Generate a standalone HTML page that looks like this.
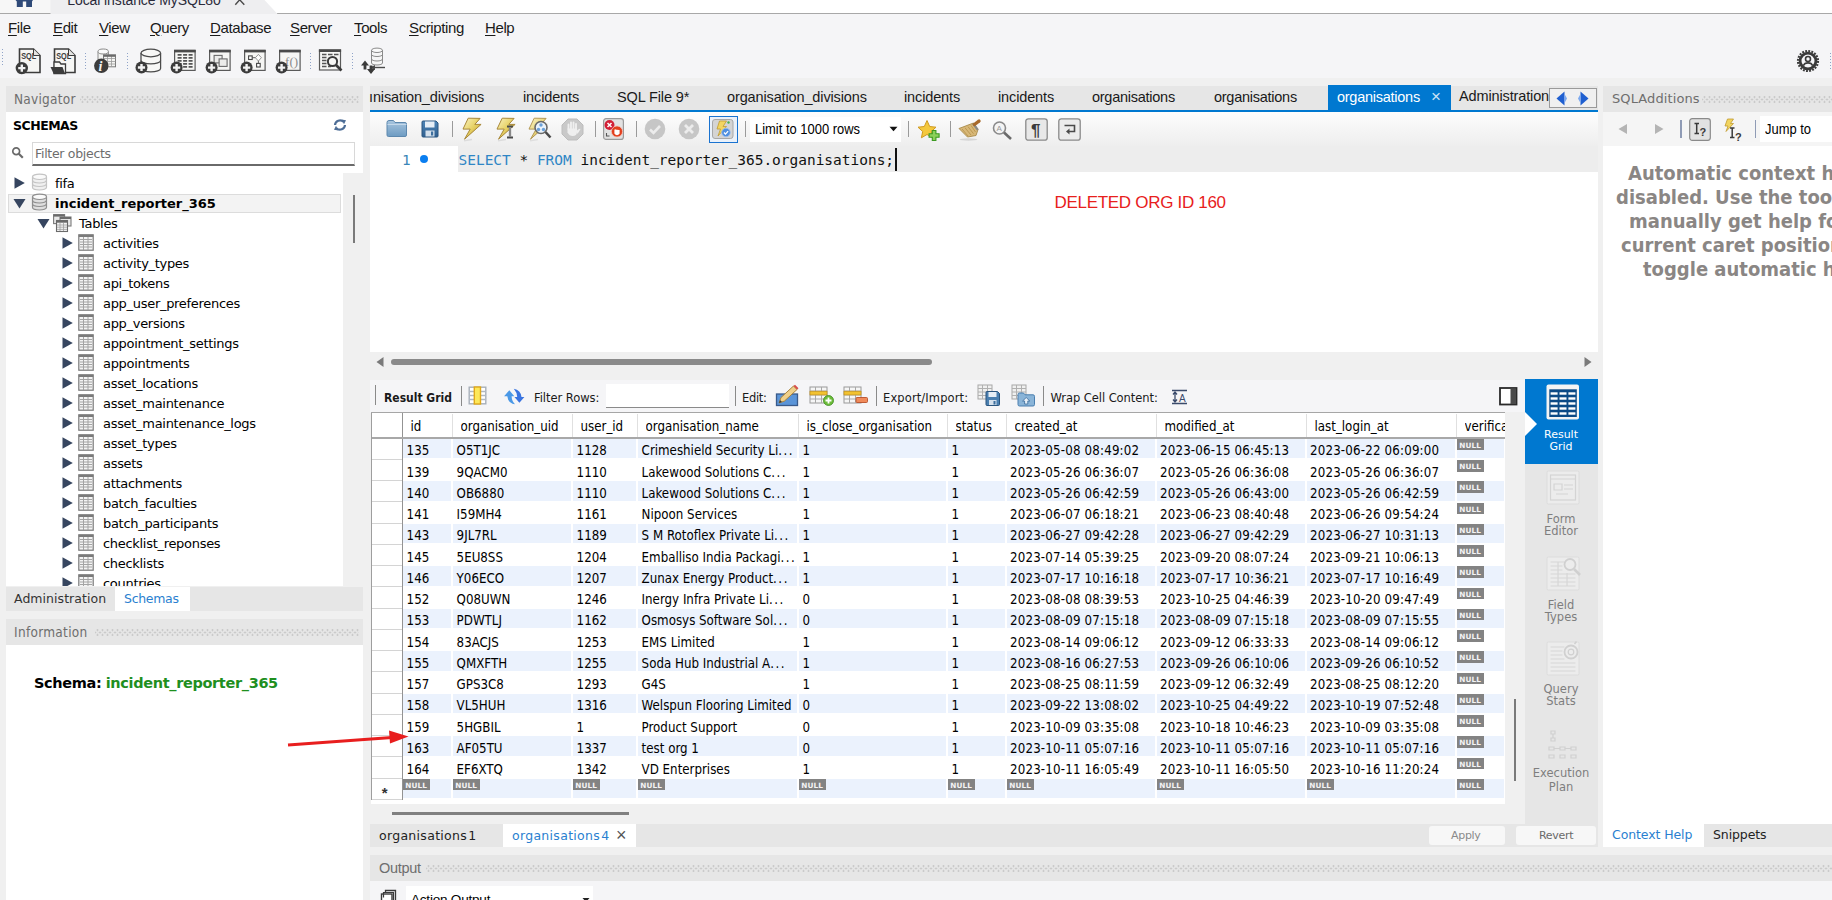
<!DOCTYPE html><html><head><meta charset="utf-8"><title>MySQL Workbench</title><style>
*{box-sizing:border-box;margin:0;padding:0}
html,body{width:1832px;height:900px;overflow:hidden;background:#f0f0f0;font-family:"Liberation Sans",sans-serif;}
.a{position:absolute;white-space:nowrap}
.dj{font-family:"DejaVu Sans","Liberation Sans",sans-serif}
.djc{font-family:"DejaVu Sans Condensed","Liberation Sans",sans-serif}
.lib{font-family:"Liberation Sans",sans-serif}
.mono{font-family:"DejaVu Sans Mono","Liberation Mono",monospace}
.menu{top:19px;font-size:15px;color:#1a1a1a;line-height:18px;letter-spacing:-0.38px}
.menu u{text-decoration:underline;text-underline-offset:2px}
.hdr{background:#e6e6e6;color:#6e6e6e;font-size:13px;line-height:25px}
.dots{background-image:radial-gradient(circle,#bdbdbd 0.75px,transparent 1.15px),radial-gradient(circle,#bdbdbd 0.75px,transparent 1.15px);background-size:5px 5px;background-position:0 -1.5px,2.5px 1px;height:7px !important}
.tree{font-size:13px;color:#000;line-height:22px;letter-spacing:-0.3px}
.tab{font-size:14.5px;color:#1a1a1a;line-height:20px;top:87px;letter-spacing:-0.13px}
.g{font-size:13.2px;color:#000;line-height:21px;letter-spacing:0}
.gh{font-size:13.2px;color:#000;line-height:24px;letter-spacing:0}
.null{background:#838383;color:#f4f4f4;font-size:7.3px;font-weight:bold;line-height:13.6px;height:11.5px;width:27px;text-align:left;padding-left:2.2px;letter-spacing:0.1px;overflow:hidden}
.rt{font-size:11.5px;color:#1a1a1a;line-height:20px;font-weight:bold}
.side{font-size:11.5px;line-height:12px;text-align:center;width:72px;color:#7e7e7e}
</style></head><body>
<div class="a" style="left:0px;top:0px;width:1832px;height:13px;background:#ffffff;"></div>
<div class="a" style="left:0px;top:0px;width:51px;height:13px;background:#f7f7f7;"></div>
<div class="a" style="left:0px;top:13px;width:51px;height:1px;background:#a8a8a8;"></div>
<div class="a" style="left:277px;top:13px;width:1555px;height:1px;background:#a8a8a8;"></div>
<svg class="a" style="left:0;top:0" width="300" height="14"><polygon points="50.500,0 264.500,0 277.500,14 50.500,14" fill="#eeeef0"/><path d="M15.500 0h17.500l-1 1.500v5.400h-5.800v-5.400h-3.400v5.400h-6v-5.400z" fill="#2f4a78"/><path d="M235.300 4.700L239.700 -0.200L244.300 4.700" stroke="#4a4a4a" stroke-width="1.400" fill="none"/></svg>
<div class="a lib" style="left:67.3px;top:-8.6px;font-size:14px;line-height:18px;color:#2a2a3a;letter-spacing:-0.1px">Local instance MySQL80</div>
<div class="a" style="left:0px;top:14px;width:1832px;height:28px;background:#f5f5f7;"></div>
<div class="a menu" style="left:8px;top:19px;"><u>F</u>ile</div>
<div class="a menu" style="left:53px;top:19px;"><u>E</u>dit</div>
<div class="a menu" style="left:99px;top:19px;"><u>V</u>iew</div>
<div class="a menu" style="left:150px;top:19px;"><u>Q</u>uery</div>
<div class="a menu" style="left:210px;top:19px;"><u>D</u>atabase</div>
<div class="a menu" style="left:290px;top:19px;"><u>S</u>erver</div>
<div class="a menu" style="left:354px;top:19px;"><u>T</u>ools</div>
<div class="a menu" style="left:409px;top:19px;"><u>S</u>cripting</div>
<div class="a menu" style="left:485px;top:19px;"><u>H</u>elp</div>
<div class="a" style="left:0px;top:42px;width:1832px;height:36px;background:#f5f5f7;"></div>
<div class="a" style="left:6px;top:86px;width:357px;height:26px;background:#e6e6e6;"></div>
<div class="a djc hdr" style="left:14px;top:86px;background:none;letter-spacing:0.25px;font-size:13.5px;line-height:26px">Navigator</div>
<div class="a dots" style="left:80px;top:95.5px;width:279px;height:7px;"></div>
<div class="a" style="left:6px;top:112px;width:357px;height:474px;background:#ffffff;"></div>
<div class="a dj" style="left:13px;top:117px;font-weight:bold;font-size:12.5px;line-height:18px;letter-spacing:-0.5px;color:#000">SCHEMAS</div>
<div class="a" style="left:32px;top:141.7px;width:323px;height:24.6px;background:#ffffff;border:1px solid #d8d8d8;border-bottom:2px solid #6a6a6a"></div>
<div class="a dj" style="left:35px;top:145px;font-size:12.5px;line-height:18px;color:#6d6d6d;letter-spacing:-0.3px">Filter objects</div>
<div class="a" style="left:343px;top:173px;width:20px;height:413px;background:#f0f0f0;"></div>
<div class="a" style="left:353px;top:195px;width:2px;height:48px;background:#7a7a7a;"></div>
<div class="a" style="left:8px;top:194px;width:333px;height:19px;background:#f3f3f3;border:1px solid #dcdcdc"></div>
<div class="a dj tree" style="left:55px;top:173px;">fifa</div>
<div class="a dj tree" style="left:55px;top:193px;font-weight:bold;letter-spacing:0px">incident_reporter_365</div>
<div class="a dj tree" style="left:79px;top:213px;">Tables</div>
<div class="a" style="left:6px;top:233px;width:337px;height:353px;overflow:hidden">
<div class="a dj tree" style="left:97px;top:0px;">activities</div>
<div class="a dj tree" style="left:97px;top:20px;">activity_types</div>
<div class="a dj tree" style="left:97px;top:40px;">api_tokens</div>
<div class="a dj tree" style="left:97px;top:60px;">app_user_preferences</div>
<div class="a dj tree" style="left:97px;top:80px;">app_versions</div>
<div class="a dj tree" style="left:97px;top:100px;">appointment_settings</div>
<div class="a dj tree" style="left:97px;top:120px;">appointments</div>
<div class="a dj tree" style="left:97px;top:140px;">asset_locations</div>
<div class="a dj tree" style="left:97px;top:160px;">asset_maintenance</div>
<div class="a dj tree" style="left:97px;top:180px;">asset_maintenance_logs</div>
<div class="a dj tree" style="left:97px;top:200px;">asset_types</div>
<div class="a dj tree" style="left:97px;top:220px;">assets</div>
<div class="a dj tree" style="left:97px;top:240px;">attachments</div>
<div class="a dj tree" style="left:97px;top:260px;">batch_faculties</div>
<div class="a dj tree" style="left:97px;top:280px;">batch_participants</div>
<div class="a dj tree" style="left:97px;top:300px;">checklist_reponses</div>
<div class="a dj tree" style="left:97px;top:320px;">checklists</div>
<div class="a dj tree" style="left:97px;top:340px;">countries</div>
</div>
<div class="a" style="left:6px;top:587px;width:357px;height:24px;background:#e6e6e6;"></div>
<div class="a" style="left:115px;top:587px;width:75px;height:24px;background:#ffffff;"></div>
<div class="a dj" style="left:14px;top:590px;font-size:12.5px;line-height:18px;color:#333;letter-spacing:0.05px">Administration</div>
<div class="a dj" style="left:124px;top:590px;font-size:12.5px;line-height:18px;color:#2a7fd0;letter-spacing:-0.3px">Schemas</div>
<div class="a" style="left:6px;top:619px;width:357px;height:26px;background:#e6e6e6;"></div>
<div class="a djc hdr" style="left:14px;top:619px;background:none;letter-spacing:0.3px;font-size:13.5px;line-height:26px">Information</div>
<div class="a dots" style="left:95px;top:628.5px;width:264px;height:7px;"></div>
<div class="a" style="left:6px;top:645px;width:357px;height:255px;background:#ffffff;"></div>
<div class="a dj" style="left:34px;top:673px;font-size:14.5px;line-height:20px;letter-spacing:-0.35px;color:#000"><b>Schema:</b> <b style="color:#1f8f1f">incident_reporter_365</b></div>
<div class="a" style="left:370px;top:86px;width:1228px;height:24px;background:#e6e6e6;"></div>
<div class="a" style="left:370px;top:109.5px;width:1228px;height:2.7px;background:#0078d0;"></div>
<div class="a lib tab" style="left:369px;top:87px;">ınisation_divisions</div>
<div class="a lib tab" style="left:523px;top:87px;">incidents</div>
<div class="a lib tab" style="left:617px;top:87px;">SQL File 9*</div>
<div class="a lib tab" style="left:727px;top:87px;">organisation_divisions</div>
<div class="a lib tab" style="left:904px;top:87px;">incidents</div>
<div class="a lib tab" style="left:998px;top:87px;">incidents</div>
<div class="a lib tab" style="left:1092px;top:87px;letter-spacing:-0.26px">organisations</div>
<div class="a lib tab" style="left:1214px;top:87px;letter-spacing:-0.26px">organisations</div>
<div class="a" style="left:1328px;top:85px;width:123px;height:25px;background:#0078d0;"></div>
<div class="a lib tab" style="left:1337px;top:87px;color:#fff;letter-spacing:-0.26px">organisations</div>
<div class="a lib tab" style="left:1431px;top:87px;color:#cfe2f5;font-size:17px">×</div>
<div class="a lib tab" style="left:1459px;top:86px;">Administration</div>
<div class="a" style="left:1549px;top:88px;width:48px;height:20px;background:#f0f0f0;border:1px solid #9a9a9a"></div>
<div class="a" style="left:370px;top:112px;width:1228px;height:34px;background:;background:linear-gradient(#fdfdfd,#eeeeee)"></div>
<div class="a" style="left:750px;top:117px;width:151px;height:25px;background:#ffffff;"></div>
<div class="a lib" style="left:755px;top:119px;font-size:14.5px;line-height:20px;color:#000;transform:scaleX(.893);transform-origin:0 0">Limit to 1000 rows</div>
<div class="a" style="left:370px;top:146px;width:1228px;height:206px;background:#ffffff;"></div>
<div class="a" style="left:458px;top:146px;width:1140px;height:25.5px;background:#ededed;"></div>
<div class="a mono" style="left:402px;top:149.7px;font-size:14.3px;line-height:20px;color:#3a86b8">1</div>
<div class="a" style="left:420px;top:155px;width:8px;height:8px;background:#0a7ef0;border-radius:50%"></div>
<div class="a mono" style="left:458.5px;top:149.7px;font-size:14.47px;line-height:20px;color:#111"><span style="color:#2f86c5">SELECT</span> * <span style="color:#2f86c5">FROM</span> incident_reporter_365.organisations;</div>
<div class="a" style="left:895px;top:148px;width:2px;height:23px;background:#111;"></div>
<div class="a lib" style="left:1054.5px;top:193px;font-size:17px;line-height:20px;color:#e8201c;letter-spacing:-0.3px">DELETED ORG ID 160</div>
<div class="a" style="left:370px;top:352px;width:1228px;height:28px;background:#f0f0f0;"></div>
<div class="a" style="left:391px;top:358.5px;width:541px;height:6.5px;background:#8a8a8a;border-radius:3.5px"></div>
<div class="a" style="left:370px;top:379.5px;width:1155px;height:33px;background:#f5f5f7;"></div>
<div class="a" style="left:375px;top:385px;width:1px;height:20px;background:#8a8a8a;"></div>
<div class="a djc rt" style="left:384px;top:387.5px;letter-spacing:0;font-size:12px">Result Grid</div>
<div class="a" style="left:461px;top:386px;width:1px;height:20px;background:#8a8a8a;"></div>
<div class="a dj rt" style="left:534px;top:387.5px;font-weight:normal;letter-spacing:-0.05px">Filter Rows:</div>
<div class="a" style="left:606px;top:384px;width:123px;height:24px;background:#ffffff;border-bottom:1px solid #8a8a8a"></div>
<div class="a" style="left:735px;top:386px;width:1px;height:20px;background:#8a8a8a;"></div>
<div class="a dj rt" style="left:742px;top:387.5px;font-weight:normal;letter-spacing:-0.3px">Edit:</div>
<div class="a" style="left:876px;top:386px;width:1px;height:20px;background:#8a8a8a;"></div>
<div class="a dj rt" style="left:883px;top:387.5px;font-weight:normal;letter-spacing:0.12px">Export/Import:</div>
<div class="a" style="left:1043px;top:386px;width:1px;height:20px;background:#8a8a8a;"></div>
<div class="a dj rt" style="left:1050.5px;top:387.5px;font-weight:normal;letter-spacing:-0.06px">Wrap Cell Content:</div>
<div class="a" style="left:370.5px;top:412px;width:1134.5px;height:392px;background:#ffffff;"></div>
<div class="a" style="left:370.5px;top:412px;width:1.5px;height:388px;background:#9e9e9e;"></div>
<div class="a" style="left:370.5px;top:412px;width:1134.5px;height:1.3px;background:#a6a6a6;"></div>
<div class="a" style="left:402px;top:414px;width:1px;height:24px;background:#e0e0e0;"></div>
<div class="a djc gh" style="left:410.5px;top:415px;width:41px;overflow:hidden">id</div>
<div class="a" style="left:452px;top:414px;width:1px;height:24px;background:#e0e0e0;"></div>
<div class="a djc gh" style="left:460.5px;top:415px;width:111px;overflow:hidden">organisation_uid</div>
<div class="a" style="left:572px;top:414px;width:1px;height:24px;background:#e0e0e0;"></div>
<div class="a djc gh" style="left:580.5px;top:415px;width:56px;overflow:hidden">user_id</div>
<div class="a" style="left:637px;top:414px;width:1px;height:24px;background:#e0e0e0;"></div>
<div class="a djc gh" style="left:645.5px;top:415px;width:152px;overflow:hidden">organisation_name</div>
<div class="a" style="left:798px;top:414px;width:1px;height:24px;background:#e0e0e0;"></div>
<div class="a djc gh" style="left:806.5px;top:415px;width:140px;overflow:hidden">is_close_organisation</div>
<div class="a" style="left:947px;top:414px;width:1px;height:24px;background:#e0e0e0;"></div>
<div class="a djc gh" style="left:955.5px;top:415px;width:50px;overflow:hidden">status</div>
<div class="a" style="left:1006px;top:414px;width:1px;height:24px;background:#e0e0e0;"></div>
<div class="a djc gh" style="left:1014.5px;top:415px;width:141px;overflow:hidden">created_at</div>
<div class="a" style="left:1156px;top:414px;width:1px;height:24px;background:#e0e0e0;"></div>
<div class="a djc gh" style="left:1164.5px;top:415px;width:141px;overflow:hidden">modified_at</div>
<div class="a" style="left:1306px;top:414px;width:1px;height:24px;background:#e0e0e0;"></div>
<div class="a djc gh" style="left:1314.5px;top:415px;width:141px;overflow:hidden">last_login_at</div>
<div class="a" style="left:1456px;top:414px;width:1px;height:24px;background:#e0e0e0;"></div>
<div class="a djc gh" style="left:1464.5px;top:415px;width:40px;overflow:hidden">verifica</div>
<div class="a" style="left:402px;top:413.3px;width:1.1px;height:386.7px;background:#939393;"></div>
<div class="a" style="left:372px;top:437px;width:1133px;height:1.6px;background:#a8a8a8;"></div>
<div class="a" style="left:372px;top:458.8px;width:30px;height:1px;background:#d4d4d4;"></div>
<div class="a" style="left:403.3px;top:438.7px;width:47.7px;height:19.6px;background:#ebf2fd;"></div>
<div class="a" style="left:453.3px;top:438.7px;width:117.7px;height:19.6px;background:#ebf2fd;"></div>
<div class="a" style="left:573.3px;top:438.7px;width:62.7px;height:19.6px;background:#ebf2fd;"></div>
<div class="a" style="left:638.3px;top:438.7px;width:158.7px;height:19.6px;background:#ebf2fd;"></div>
<div class="a" style="left:799.3px;top:438.7px;width:146.7px;height:19.6px;background:#ebf2fd;"></div>
<div class="a" style="left:948.3px;top:438.7px;width:56.7px;height:19.6px;background:#ebf2fd;"></div>
<div class="a" style="left:1007.3px;top:438.7px;width:147.7px;height:19.6px;background:#ebf2fd;"></div>
<div class="a" style="left:1157.3px;top:438.7px;width:147.7px;height:19.6px;background:#ebf2fd;"></div>
<div class="a" style="left:1307.3px;top:438.7px;width:147.7px;height:19.6px;background:#ebf2fd;"></div>
<div class="a" style="left:1457.3px;top:438.7px;width:46.7px;height:19.6px;background:#ebf2fd;"></div>
<div class="a djc g" style="left:406.6px;top:440.3px;">135</div>
<div class="a djc g" style="left:456.6px;top:440.3px;">O5T1JC</div>
<div class="a djc g" style="left:576.6px;top:440.3px;">1128</div>
<div class="a djc g" style="left:641.6px;top:440.3px;">Crimeshield Security Li<span style="letter-spacing:1.500px">...</span></div>
<div class="a djc g" style="left:802.6px;top:440.3px;">1</div>
<div class="a djc g" style="left:951.6px;top:440.3px;">1</div>
<div class="a djc g" style="left:1010.0px;top:440.3px;letter-spacing:0.17px;">2023-05-08 08:49:02</div>
<div class="a djc g" style="left:1160.0px;top:440.3px;letter-spacing:0.17px;">2023-06-15 06:45:13</div>
<div class="a djc g" style="left:1310.0px;top:440.3px;letter-spacing:0.17px;">2023-06-22 06:09:00</div>
<div class="a dj null" style="left:1457px;top:438.8px">NULL</div>
<div class="a" style="left:372px;top:480.0px;width:30px;height:1px;background:#d4d4d4;"></div>
<div class="a djc g" style="left:406.6px;top:461.6px;">139</div>
<div class="a djc g" style="left:456.6px;top:461.6px;">9QACM0</div>
<div class="a djc g" style="left:576.6px;top:461.6px;">1110</div>
<div class="a djc g" style="left:641.6px;top:461.6px;">Lakewood Solutions C<span style="letter-spacing:1.500px">...</span></div>
<div class="a djc g" style="left:802.6px;top:461.6px;">1</div>
<div class="a djc g" style="left:951.6px;top:461.6px;">1</div>
<div class="a djc g" style="left:1010.0px;top:461.6px;letter-spacing:0.17px;">2023-05-26 06:36:07</div>
<div class="a djc g" style="left:1160.0px;top:461.6px;letter-spacing:0.17px;">2023-05-26 06:36:08</div>
<div class="a djc g" style="left:1310.0px;top:461.6px;letter-spacing:0.17px;">2023-05-26 06:36:07</div>
<div class="a dj null" style="left:1457px;top:460.1px">NULL</div>
<div class="a" style="left:372px;top:501.2px;width:30px;height:1px;background:#d4d4d4;"></div>
<div class="a" style="left:403.3px;top:481.2px;width:47.7px;height:19.6px;background:#ebf2fd;"></div>
<div class="a" style="left:453.3px;top:481.2px;width:117.7px;height:19.6px;background:#ebf2fd;"></div>
<div class="a" style="left:573.3px;top:481.2px;width:62.7px;height:19.6px;background:#ebf2fd;"></div>
<div class="a" style="left:638.3px;top:481.2px;width:158.7px;height:19.6px;background:#ebf2fd;"></div>
<div class="a" style="left:799.3px;top:481.2px;width:146.7px;height:19.6px;background:#ebf2fd;"></div>
<div class="a" style="left:948.3px;top:481.2px;width:56.7px;height:19.6px;background:#ebf2fd;"></div>
<div class="a" style="left:1007.3px;top:481.2px;width:147.7px;height:19.6px;background:#ebf2fd;"></div>
<div class="a" style="left:1157.3px;top:481.2px;width:147.7px;height:19.6px;background:#ebf2fd;"></div>
<div class="a" style="left:1307.3px;top:481.2px;width:147.7px;height:19.6px;background:#ebf2fd;"></div>
<div class="a" style="left:1457.3px;top:481.2px;width:46.7px;height:19.6px;background:#ebf2fd;"></div>
<div class="a djc g" style="left:406.6px;top:482.8px;">140</div>
<div class="a djc g" style="left:456.6px;top:482.8px;">OB6880</div>
<div class="a djc g" style="left:576.6px;top:482.8px;">1110</div>
<div class="a djc g" style="left:641.6px;top:482.8px;">Lakewood Solutions C<span style="letter-spacing:1.500px">...</span></div>
<div class="a djc g" style="left:802.6px;top:482.8px;">1</div>
<div class="a djc g" style="left:951.6px;top:482.8px;">1</div>
<div class="a djc g" style="left:1010.0px;top:482.8px;letter-spacing:0.17px;">2023-05-26 06:42:59</div>
<div class="a djc g" style="left:1160.0px;top:482.8px;letter-spacing:0.17px;">2023-05-26 06:43:00</div>
<div class="a djc g" style="left:1310.0px;top:482.8px;letter-spacing:0.17px;">2023-05-26 06:42:59</div>
<div class="a dj null" style="left:1457px;top:481.3px">NULL</div>
<div class="a" style="left:372px;top:522.5px;width:30px;height:1px;background:#d4d4d4;"></div>
<div class="a djc g" style="left:406.6px;top:504.1px;">141</div>
<div class="a djc g" style="left:456.6px;top:504.1px;">I59MH4</div>
<div class="a djc g" style="left:576.6px;top:504.1px;">1161</div>
<div class="a djc g" style="left:641.6px;top:504.1px;">Nipoon Services</div>
<div class="a djc g" style="left:802.6px;top:504.1px;">1</div>
<div class="a djc g" style="left:951.6px;top:504.1px;">1</div>
<div class="a djc g" style="left:1010.0px;top:504.1px;letter-spacing:0.17px;">2023-06-07 06:18:21</div>
<div class="a djc g" style="left:1160.0px;top:504.1px;letter-spacing:0.17px;">2023-06-23 08:40:48</div>
<div class="a djc g" style="left:1310.0px;top:504.1px;letter-spacing:0.17px;">2023-06-26 09:54:24</div>
<div class="a dj null" style="left:1457px;top:502.6px">NULL</div>
<div class="a" style="left:372px;top:543.8px;width:30px;height:1px;background:#d4d4d4;"></div>
<div class="a" style="left:403.3px;top:523.7px;width:47.7px;height:19.6px;background:#ebf2fd;"></div>
<div class="a" style="left:453.3px;top:523.7px;width:117.7px;height:19.6px;background:#ebf2fd;"></div>
<div class="a" style="left:573.3px;top:523.7px;width:62.7px;height:19.6px;background:#ebf2fd;"></div>
<div class="a" style="left:638.3px;top:523.7px;width:158.7px;height:19.6px;background:#ebf2fd;"></div>
<div class="a" style="left:799.3px;top:523.7px;width:146.7px;height:19.6px;background:#ebf2fd;"></div>
<div class="a" style="left:948.3px;top:523.7px;width:56.7px;height:19.6px;background:#ebf2fd;"></div>
<div class="a" style="left:1007.3px;top:523.7px;width:147.7px;height:19.6px;background:#ebf2fd;"></div>
<div class="a" style="left:1157.3px;top:523.7px;width:147.7px;height:19.6px;background:#ebf2fd;"></div>
<div class="a" style="left:1307.3px;top:523.7px;width:147.7px;height:19.6px;background:#ebf2fd;"></div>
<div class="a" style="left:1457.3px;top:523.7px;width:46.7px;height:19.6px;background:#ebf2fd;"></div>
<div class="a djc g" style="left:406.6px;top:525.3px;">143</div>
<div class="a djc g" style="left:456.6px;top:525.3px;">9JL7RL</div>
<div class="a djc g" style="left:576.6px;top:525.3px;">1189</div>
<div class="a djc g" style="left:641.6px;top:525.3px;">S M Rotoflex Private Li<span style="letter-spacing:1.500px">...</span></div>
<div class="a djc g" style="left:802.6px;top:525.3px;">1</div>
<div class="a djc g" style="left:951.6px;top:525.3px;">1</div>
<div class="a djc g" style="left:1010.0px;top:525.3px;letter-spacing:0.17px;">2023-06-27 09:42:28</div>
<div class="a djc g" style="left:1160.0px;top:525.3px;letter-spacing:0.17px;">2023-06-27 09:42:29</div>
<div class="a djc g" style="left:1310.0px;top:525.3px;letter-spacing:0.17px;">2023-06-27 10:31:13</div>
<div class="a dj null" style="left:1457px;top:523.8px">NULL</div>
<div class="a" style="left:372px;top:565.0px;width:30px;height:1px;background:#d4d4d4;"></div>
<div class="a djc g" style="left:406.6px;top:546.6px;">145</div>
<div class="a djc g" style="left:456.6px;top:546.6px;">5EU8SS</div>
<div class="a djc g" style="left:576.6px;top:546.6px;">1204</div>
<div class="a djc g" style="left:641.6px;top:546.6px;">Emballiso India Packagi<span style="letter-spacing:1.500px">...</span></div>
<div class="a djc g" style="left:802.6px;top:546.6px;">1</div>
<div class="a djc g" style="left:951.6px;top:546.6px;">1</div>
<div class="a djc g" style="left:1010.0px;top:546.6px;letter-spacing:0.17px;">2023-07-14 05:39:25</div>
<div class="a djc g" style="left:1160.0px;top:546.6px;letter-spacing:0.17px;">2023-09-20 08:07:24</div>
<div class="a djc g" style="left:1310.0px;top:546.6px;letter-spacing:0.17px;">2023-09-21 10:06:13</div>
<div class="a dj null" style="left:1457px;top:545.1px">NULL</div>
<div class="a" style="left:372px;top:586.2px;width:30px;height:1px;background:#d4d4d4;"></div>
<div class="a" style="left:403.3px;top:566.2px;width:47.7px;height:19.6px;background:#ebf2fd;"></div>
<div class="a" style="left:453.3px;top:566.2px;width:117.7px;height:19.6px;background:#ebf2fd;"></div>
<div class="a" style="left:573.3px;top:566.2px;width:62.7px;height:19.6px;background:#ebf2fd;"></div>
<div class="a" style="left:638.3px;top:566.2px;width:158.7px;height:19.6px;background:#ebf2fd;"></div>
<div class="a" style="left:799.3px;top:566.2px;width:146.7px;height:19.6px;background:#ebf2fd;"></div>
<div class="a" style="left:948.3px;top:566.2px;width:56.7px;height:19.6px;background:#ebf2fd;"></div>
<div class="a" style="left:1007.3px;top:566.2px;width:147.7px;height:19.6px;background:#ebf2fd;"></div>
<div class="a" style="left:1157.3px;top:566.2px;width:147.7px;height:19.6px;background:#ebf2fd;"></div>
<div class="a" style="left:1307.3px;top:566.2px;width:147.7px;height:19.6px;background:#ebf2fd;"></div>
<div class="a" style="left:1457.3px;top:566.2px;width:46.7px;height:19.6px;background:#ebf2fd;"></div>
<div class="a djc g" style="left:406.6px;top:567.8px;">146</div>
<div class="a djc g" style="left:456.6px;top:567.8px;">Y06ECO</div>
<div class="a djc g" style="left:576.6px;top:567.8px;">1207</div>
<div class="a djc g" style="left:641.6px;top:567.8px;">Zunax Energy Product<span style="letter-spacing:1.500px">...</span></div>
<div class="a djc g" style="left:802.6px;top:567.8px;">1</div>
<div class="a djc g" style="left:951.6px;top:567.8px;">1</div>
<div class="a djc g" style="left:1010.0px;top:567.8px;letter-spacing:0.17px;">2023-07-17 10:16:18</div>
<div class="a djc g" style="left:1160.0px;top:567.8px;letter-spacing:0.17px;">2023-07-17 10:36:21</div>
<div class="a djc g" style="left:1310.0px;top:567.8px;letter-spacing:0.17px;">2023-07-17 10:16:49</div>
<div class="a dj null" style="left:1457px;top:566.3px">NULL</div>
<div class="a" style="left:372px;top:607.5px;width:30px;height:1px;background:#d4d4d4;"></div>
<div class="a djc g" style="left:406.6px;top:589.1px;">152</div>
<div class="a djc g" style="left:456.6px;top:589.1px;">Q08UWN</div>
<div class="a djc g" style="left:576.6px;top:589.1px;">1246</div>
<div class="a djc g" style="left:641.6px;top:589.1px;">Inergy Infra Private Li<span style="letter-spacing:1.500px">...</span></div>
<div class="a djc g" style="left:802.6px;top:589.1px;">0</div>
<div class="a djc g" style="left:951.6px;top:589.1px;">1</div>
<div class="a djc g" style="left:1010.0px;top:589.1px;letter-spacing:0.17px;">2023-08-08 08:39:53</div>
<div class="a djc g" style="left:1160.0px;top:589.1px;letter-spacing:0.17px;">2023-10-25 04:46:39</div>
<div class="a djc g" style="left:1310.0px;top:589.1px;letter-spacing:0.17px;">2023-10-20 09:47:49</div>
<div class="a dj null" style="left:1457px;top:587.6px">NULL</div>
<div class="a" style="left:372px;top:628.8px;width:30px;height:1px;background:#d4d4d4;"></div>
<div class="a" style="left:403.3px;top:608.7px;width:47.7px;height:19.6px;background:#ebf2fd;"></div>
<div class="a" style="left:453.3px;top:608.7px;width:117.7px;height:19.6px;background:#ebf2fd;"></div>
<div class="a" style="left:573.3px;top:608.7px;width:62.7px;height:19.6px;background:#ebf2fd;"></div>
<div class="a" style="left:638.3px;top:608.7px;width:158.7px;height:19.6px;background:#ebf2fd;"></div>
<div class="a" style="left:799.3px;top:608.7px;width:146.7px;height:19.6px;background:#ebf2fd;"></div>
<div class="a" style="left:948.3px;top:608.7px;width:56.7px;height:19.6px;background:#ebf2fd;"></div>
<div class="a" style="left:1007.3px;top:608.7px;width:147.7px;height:19.6px;background:#ebf2fd;"></div>
<div class="a" style="left:1157.3px;top:608.7px;width:147.7px;height:19.6px;background:#ebf2fd;"></div>
<div class="a" style="left:1307.3px;top:608.7px;width:147.7px;height:19.6px;background:#ebf2fd;"></div>
<div class="a" style="left:1457.3px;top:608.7px;width:46.7px;height:19.6px;background:#ebf2fd;"></div>
<div class="a djc g" style="left:406.6px;top:610.3px;">153</div>
<div class="a djc g" style="left:456.6px;top:610.3px;">PDWTLJ</div>
<div class="a djc g" style="left:576.6px;top:610.3px;">1162</div>
<div class="a djc g" style="left:641.6px;top:610.3px;">Osmosys Software Sol<span style="letter-spacing:1.500px">...</span></div>
<div class="a djc g" style="left:802.6px;top:610.3px;">0</div>
<div class="a djc g" style="left:951.6px;top:610.3px;">1</div>
<div class="a djc g" style="left:1010.0px;top:610.3px;letter-spacing:0.17px;">2023-08-09 07:15:18</div>
<div class="a djc g" style="left:1160.0px;top:610.3px;letter-spacing:0.17px;">2023-08-09 07:15:18</div>
<div class="a djc g" style="left:1310.0px;top:610.3px;letter-spacing:0.17px;">2023-08-09 07:15:55</div>
<div class="a dj null" style="left:1457px;top:608.8px">NULL</div>
<div class="a" style="left:372px;top:650.0px;width:30px;height:1px;background:#d4d4d4;"></div>
<div class="a djc g" style="left:406.6px;top:631.6px;">154</div>
<div class="a djc g" style="left:456.6px;top:631.6px;">83ACJS</div>
<div class="a djc g" style="left:576.6px;top:631.6px;">1253</div>
<div class="a djc g" style="left:641.6px;top:631.6px;">EMS Limited</div>
<div class="a djc g" style="left:802.6px;top:631.6px;">1</div>
<div class="a djc g" style="left:951.6px;top:631.6px;">1</div>
<div class="a djc g" style="left:1010.0px;top:631.6px;letter-spacing:0.17px;">2023-08-14 09:06:12</div>
<div class="a djc g" style="left:1160.0px;top:631.6px;letter-spacing:0.17px;">2023-09-12 06:33:33</div>
<div class="a djc g" style="left:1310.0px;top:631.6px;letter-spacing:0.17px;">2023-08-14 09:06:12</div>
<div class="a dj null" style="left:1457px;top:630.1px">NULL</div>
<div class="a" style="left:372px;top:671.2px;width:30px;height:1px;background:#d4d4d4;"></div>
<div class="a" style="left:403.3px;top:651.2px;width:47.7px;height:19.6px;background:#ebf2fd;"></div>
<div class="a" style="left:453.3px;top:651.2px;width:117.7px;height:19.6px;background:#ebf2fd;"></div>
<div class="a" style="left:573.3px;top:651.2px;width:62.7px;height:19.6px;background:#ebf2fd;"></div>
<div class="a" style="left:638.3px;top:651.2px;width:158.7px;height:19.6px;background:#ebf2fd;"></div>
<div class="a" style="left:799.3px;top:651.2px;width:146.7px;height:19.6px;background:#ebf2fd;"></div>
<div class="a" style="left:948.3px;top:651.2px;width:56.7px;height:19.6px;background:#ebf2fd;"></div>
<div class="a" style="left:1007.3px;top:651.2px;width:147.7px;height:19.6px;background:#ebf2fd;"></div>
<div class="a" style="left:1157.3px;top:651.2px;width:147.7px;height:19.6px;background:#ebf2fd;"></div>
<div class="a" style="left:1307.3px;top:651.2px;width:147.7px;height:19.6px;background:#ebf2fd;"></div>
<div class="a" style="left:1457.3px;top:651.2px;width:46.7px;height:19.6px;background:#ebf2fd;"></div>
<div class="a djc g" style="left:406.6px;top:652.8px;">155</div>
<div class="a djc g" style="left:456.6px;top:652.8px;">QMXFTH</div>
<div class="a djc g" style="left:576.6px;top:652.8px;">1255</div>
<div class="a djc g" style="left:641.6px;top:652.8px;">Soda Hub Industrial A<span style="letter-spacing:1.500px">...</span></div>
<div class="a djc g" style="left:802.6px;top:652.8px;">1</div>
<div class="a djc g" style="left:951.6px;top:652.8px;">1</div>
<div class="a djc g" style="left:1010.0px;top:652.8px;letter-spacing:0.17px;">2023-08-16 06:27:53</div>
<div class="a djc g" style="left:1160.0px;top:652.8px;letter-spacing:0.17px;">2023-09-26 06:10:06</div>
<div class="a djc g" style="left:1310.0px;top:652.8px;letter-spacing:0.17px;">2023-09-26 06:10:52</div>
<div class="a dj null" style="left:1457px;top:651.3px">NULL</div>
<div class="a" style="left:372px;top:692.5px;width:30px;height:1px;background:#d4d4d4;"></div>
<div class="a djc g" style="left:406.6px;top:674.1px;">157</div>
<div class="a djc g" style="left:456.6px;top:674.1px;">GPS3C8</div>
<div class="a djc g" style="left:576.6px;top:674.1px;">1293</div>
<div class="a djc g" style="left:641.6px;top:674.1px;">G4S</div>
<div class="a djc g" style="left:802.6px;top:674.1px;">1</div>
<div class="a djc g" style="left:951.6px;top:674.1px;">1</div>
<div class="a djc g" style="left:1010.0px;top:674.1px;letter-spacing:0.17px;">2023-08-25 08:11:59</div>
<div class="a djc g" style="left:1160.0px;top:674.1px;letter-spacing:0.17px;">2023-09-12 06:32:49</div>
<div class="a djc g" style="left:1310.0px;top:674.1px;letter-spacing:0.17px;">2023-08-25 08:12:20</div>
<div class="a dj null" style="left:1457px;top:672.6px">NULL</div>
<div class="a" style="left:372px;top:713.8px;width:30px;height:1px;background:#d4d4d4;"></div>
<div class="a" style="left:403.3px;top:693.7px;width:47.7px;height:19.6px;background:#ebf2fd;"></div>
<div class="a" style="left:453.3px;top:693.7px;width:117.7px;height:19.6px;background:#ebf2fd;"></div>
<div class="a" style="left:573.3px;top:693.7px;width:62.7px;height:19.6px;background:#ebf2fd;"></div>
<div class="a" style="left:638.3px;top:693.7px;width:158.7px;height:19.6px;background:#ebf2fd;"></div>
<div class="a" style="left:799.3px;top:693.7px;width:146.7px;height:19.6px;background:#ebf2fd;"></div>
<div class="a" style="left:948.3px;top:693.7px;width:56.7px;height:19.6px;background:#ebf2fd;"></div>
<div class="a" style="left:1007.3px;top:693.7px;width:147.7px;height:19.6px;background:#ebf2fd;"></div>
<div class="a" style="left:1157.3px;top:693.7px;width:147.7px;height:19.6px;background:#ebf2fd;"></div>
<div class="a" style="left:1307.3px;top:693.7px;width:147.7px;height:19.6px;background:#ebf2fd;"></div>
<div class="a" style="left:1457.3px;top:693.7px;width:46.7px;height:19.6px;background:#ebf2fd;"></div>
<div class="a djc g" style="left:406.6px;top:695.3px;">158</div>
<div class="a djc g" style="left:456.6px;top:695.3px;">VL5HUH</div>
<div class="a djc g" style="left:576.6px;top:695.3px;">1316</div>
<div class="a djc g" style="left:641.6px;top:695.3px;">Welspun Flooring Limited</div>
<div class="a djc g" style="left:802.6px;top:695.3px;">0</div>
<div class="a djc g" style="left:951.6px;top:695.3px;">1</div>
<div class="a djc g" style="left:1010.0px;top:695.3px;letter-spacing:0.17px;">2023-09-22 13:08:02</div>
<div class="a djc g" style="left:1160.0px;top:695.3px;letter-spacing:0.17px;">2023-10-25 04:49:22</div>
<div class="a djc g" style="left:1310.0px;top:695.3px;letter-spacing:0.17px;">2023-10-19 07:52:48</div>
<div class="a dj null" style="left:1457px;top:693.8px">NULL</div>
<div class="a" style="left:372px;top:735.0px;width:30px;height:1px;background:#d4d4d4;"></div>
<div class="a djc g" style="left:406.6px;top:716.6px;">159</div>
<div class="a djc g" style="left:456.6px;top:716.6px;">5HGBIL</div>
<div class="a djc g" style="left:576.6px;top:716.6px;">1</div>
<div class="a djc g" style="left:641.6px;top:716.6px;">Product Support</div>
<div class="a djc g" style="left:802.6px;top:716.6px;">0</div>
<div class="a djc g" style="left:951.6px;top:716.6px;">1</div>
<div class="a djc g" style="left:1010.0px;top:716.6px;letter-spacing:0.17px;">2023-10-09 03:35:08</div>
<div class="a djc g" style="left:1160.0px;top:716.6px;letter-spacing:0.17px;">2023-10-18 10:46:23</div>
<div class="a djc g" style="left:1310.0px;top:716.6px;letter-spacing:0.17px;">2023-10-09 03:35:08</div>
<div class="a dj null" style="left:1457px;top:715.1px">NULL</div>
<div class="a" style="left:372px;top:756.2px;width:30px;height:1px;background:#d4d4d4;"></div>
<div class="a" style="left:403.3px;top:736.2px;width:47.7px;height:19.6px;background:#ebf2fd;"></div>
<div class="a" style="left:453.3px;top:736.2px;width:117.7px;height:19.6px;background:#ebf2fd;"></div>
<div class="a" style="left:573.3px;top:736.2px;width:62.7px;height:19.6px;background:#ebf2fd;"></div>
<div class="a" style="left:638.3px;top:736.2px;width:158.7px;height:19.6px;background:#ebf2fd;"></div>
<div class="a" style="left:799.3px;top:736.2px;width:146.7px;height:19.6px;background:#ebf2fd;"></div>
<div class="a" style="left:948.3px;top:736.2px;width:56.7px;height:19.6px;background:#ebf2fd;"></div>
<div class="a" style="left:1007.3px;top:736.2px;width:147.7px;height:19.6px;background:#ebf2fd;"></div>
<div class="a" style="left:1157.3px;top:736.2px;width:147.7px;height:19.6px;background:#ebf2fd;"></div>
<div class="a" style="left:1307.3px;top:736.2px;width:147.7px;height:19.6px;background:#ebf2fd;"></div>
<div class="a" style="left:1457.3px;top:736.2px;width:46.7px;height:19.6px;background:#ebf2fd;"></div>
<div class="a djc g" style="left:406.6px;top:737.8px;">163</div>
<div class="a djc g" style="left:456.6px;top:737.8px;">AF05TU</div>
<div class="a djc g" style="left:576.6px;top:737.8px;">1337</div>
<div class="a djc g" style="left:641.6px;top:737.8px;">test org 1</div>
<div class="a djc g" style="left:802.6px;top:737.8px;">0</div>
<div class="a djc g" style="left:951.6px;top:737.8px;">1</div>
<div class="a djc g" style="left:1010.0px;top:737.8px;letter-spacing:0.17px;">2023-10-11 05:07:16</div>
<div class="a djc g" style="left:1160.0px;top:737.8px;letter-spacing:0.17px;">2023-10-11 05:07:16</div>
<div class="a djc g" style="left:1310.0px;top:737.8px;letter-spacing:0.17px;">2023-10-11 05:07:16</div>
<div class="a dj null" style="left:1457px;top:736.3px">NULL</div>
<div class="a" style="left:372px;top:777.5px;width:30px;height:1px;background:#d4d4d4;"></div>
<div class="a djc g" style="left:406.6px;top:759.1px;">164</div>
<div class="a djc g" style="left:456.6px;top:759.1px;">EF6XTQ</div>
<div class="a djc g" style="left:576.6px;top:759.1px;">1342</div>
<div class="a djc g" style="left:641.6px;top:759.1px;">VD Enterprises</div>
<div class="a djc g" style="left:802.6px;top:759.1px;">1</div>
<div class="a djc g" style="left:951.6px;top:759.1px;">1</div>
<div class="a djc g" style="left:1010.0px;top:759.1px;letter-spacing:0.17px;">2023-10-11 16:05:49</div>
<div class="a djc g" style="left:1160.0px;top:759.1px;letter-spacing:0.17px;">2023-10-11 16:05:50</div>
<div class="a djc g" style="left:1310.0px;top:759.1px;letter-spacing:0.17px;">2023-10-16 11:20:24</div>
<div class="a dj null" style="left:1457px;top:757.6px">NULL</div>
<div class="a" style="left:372px;top:798.8px;width:30px;height:1px;background:#d4d4d4;"></div>
<div class="a" style="left:403.3px;top:778.7px;width:47.7px;height:19.6px;background:#ebf2fd;"></div>
<div class="a" style="left:453.3px;top:778.7px;width:117.7px;height:19.6px;background:#ebf2fd;"></div>
<div class="a" style="left:573.3px;top:778.7px;width:62.7px;height:19.6px;background:#ebf2fd;"></div>
<div class="a" style="left:638.3px;top:778.7px;width:158.7px;height:19.6px;background:#ebf2fd;"></div>
<div class="a" style="left:799.3px;top:778.7px;width:146.7px;height:19.6px;background:#ebf2fd;"></div>
<div class="a" style="left:948.3px;top:778.7px;width:56.7px;height:19.6px;background:#ebf2fd;"></div>
<div class="a" style="left:1007.3px;top:778.7px;width:147.7px;height:19.6px;background:#ebf2fd;"></div>
<div class="a" style="left:1157.3px;top:778.7px;width:147.7px;height:19.6px;background:#ebf2fd;"></div>
<div class="a" style="left:1307.3px;top:778.7px;width:147.7px;height:19.6px;background:#ebf2fd;"></div>
<div class="a" style="left:1457.3px;top:778.7px;width:46.7px;height:19.6px;background:#ebf2fd;"></div>
<div class="a dj null" style="left:403px;top:778.8px">NULL</div>
<div class="a dj null" style="left:453px;top:778.8px">NULL</div>
<div class="a dj null" style="left:573px;top:778.8px">NULL</div>
<div class="a dj null" style="left:638px;top:778.8px">NULL</div>
<div class="a dj null" style="left:799px;top:778.8px">NULL</div>
<div class="a dj null" style="left:948px;top:778.8px">NULL</div>
<div class="a dj null" style="left:1007px;top:778.8px">NULL</div>
<div class="a dj null" style="left:1157px;top:778.8px">NULL</div>
<div class="a dj null" style="left:1307px;top:778.8px">NULL</div>
<div class="a dj null" style="left:1457px;top:778.8px">NULL</div>
<div class="a lib" style="left:381.7px;top:785.2px;font-size:15px;line-height:16px;color:#333;font-weight:bold">*</div>
<div class="a" style="left:1505px;top:412px;width:20px;height:392px;background:#f0f0f0;"></div>
<div class="a" style="left:1514px;top:699px;width:2px;height:82px;background:#7a7a7a;"></div>
<div class="a" style="left:370px;top:804px;width:1155px;height:20px;background:#f0f0f0;"></div>
<div class="a" style="left:392px;top:812.3px;width:237px;height:2.5px;background:#808080;"></div>
<svg class="a" style="left:280px;top:725px" width="140" height="30"><line x1="8" y1="20" x2="112" y2="12.500" stroke="#e81e1e" stroke-width="3.2"/><polygon points="109,5.500 128.500,11.500 110,18.500" fill="#e81e1e"/></svg>
<div class="a" style="left:1525px;top:379px;width:73px;height:445px;background:#e6e6e6;"></div>
<div class="a" style="left:1525px;top:379px;width:73px;height:85px;background:#0078d0;"></div>
<svg class="a" style="left:1525px;top:412px" width="13" height="24"><polygon points="0,0 12,12 0,24" fill="#ffffff"/></svg>
<div class="a dj side" style="left:1525px;top:429px;color:#fff;font-size:11px">Result<br>Grid</div>
<div class="a dj side" style="left:1525px;top:513px;">Form<br>Editor</div>
<div class="a dj side" style="left:1525px;top:599px;">Field<br>Types</div>
<div class="a dj side" style="left:1525px;top:683px;">Query<br>Stats</div>
<div class="a dj side" style="left:1525px;top:767px;line-height:13.5px">Execution<br>Plan</div>
<div class="a" style="left:370px;top:824px;width:1228px;height:23.3px;background:#e6e6e6;"></div>
<div class="a" style="left:503px;top:824px;width:133px;height:23.3px;background:#ffffff;"></div>
<div class="a dj" style="left:379px;top:827px;font-size:12.5px;line-height:18px;color:#222;letter-spacing:0.3px;word-spacing:-3px">organisations 1</div>
<div class="a dj" style="left:512px;top:827px;font-size:12.5px;line-height:18px;color:#2a7fd0;letter-spacing:0.3px;word-spacing:-3px">organisations 4</div>
<div class="a lib" style="left:616px;top:824px;font-size:18px;line-height:22px;color:#555">×</div>
<div class="a" style="left:1428.5px;top:826px;width:76.5px;height:18.5px;background:#f7f7f7;border-radius:3px"></div>
<div class="a" style="left:1515.5px;top:826px;width:80px;height:18.5px;background:#f7f7f7;border-radius:3px"></div>
<div class="a dj" style="left:1451px;top:827px;font-size:11px;line-height:18px;color:#8a8a8a;letter-spacing:-0.3px">Apply</div>
<div class="a dj" style="left:1539px;top:827px;font-size:11px;line-height:18px;color:#6a6a6a;letter-spacing:-0.3px">Revert</div>
<div class="a" style="left:370px;top:855px;width:1462px;height:25.5px;background:#e6e6e6;"></div>
<div class="a lib" style="left:379px;top:858px;font-size:14.5px;line-height:20px;color:#6e6e6e;letter-spacing:-0.3px">Output</div>
<div class="a dots" style="left:426px;top:864.5px;width:1406px;height:7px;"></div>
<div class="a" style="left:370px;top:880.5px;width:1462px;height:19.5px;background:#f5f5f7;"></div>
<div class="a" style="left:406px;top:886px;width:187px;height:14px;background:#ffffff;"></div>
<div class="a lib" style="left:411px;top:889.5px;font-size:13.5px;line-height:20px;color:#000;letter-spacing:-0.2px">Action Output</div>
<svg class="a" style="left:580.500px;top:895.500px" width="10" height="6"><polygon points="1.500,2 8.500,2 5,6" fill="#222"/></svg>
<div class="a" style="left:1603px;top:86px;width:229px;height:26px;background:#e6e6e6;"></div>
<div class="a dj hdr" style="left:1612px;top:86px;background:none;letter-spacing:0.1px">SQLAdditions</div>
<div class="a dots" style="left:1702px;top:95.5px;width:130px;height:7px;"></div>
<div class="a" style="left:1603px;top:112px;width:229px;height:34px;background:#f5f5f5;"></div>
<div class="a" style="left:1760px;top:116px;width:72px;height:26px;background:#ffffff;"></div>
<div class="a lib" style="left:1765px;top:119px;font-size:14.5px;line-height:20px;color:#000;transform:scaleX(.893);transform-origin:0 0">Jump to</div>
<div class="a" style="left:1603px;top:146px;width:229px;height:678px;background:#ffffff;"></div>
<div class="a djc" style="left:1628px;top:161px;font-size:20px;font-weight:bold;color:#8a8684;line-height:24px;letter-spacing:0">Automatic context help is</div>
<div class="a djc" style="left:1616px;top:185px;font-size:20px;font-weight:bold;color:#8a8684;line-height:24px;letter-spacing:0">disabled. Use the toolbar to</div>
<div class="a djc" style="left:1629px;top:209px;font-size:20px;font-weight:bold;color:#8a8684;line-height:24px;letter-spacing:0">manually get help for the</div>
<div class="a djc" style="left:1621px;top:233px;font-size:20px;font-weight:bold;color:#8a8684;line-height:24px;letter-spacing:0">current caret position or to</div>
<div class="a djc" style="left:1643px;top:257px;font-size:20px;font-weight:bold;color:#8a8684;line-height:24px;letter-spacing:0">toggle automatic help.</div>
<div class="a" style="left:1603px;top:824px;width:229px;height:23.3px;background:#e6e6e6;"></div>
<div class="a" style="left:1603px;top:824px;width:101px;height:23.3px;background:#ffffff;"></div>
<div class="a dj" style="left:1612px;top:826px;font-size:12.5px;line-height:18px;color:#2a7fd0;letter-spacing:-0.1px">Context Help</div>
<div class="a dj" style="left:1713px;top:826px;font-size:12.5px;line-height:18px;color:#222;letter-spacing:-0.1px">Snippets</div>
<div class="a" style="left:2px;top:49px;width:1px;height:17px;background-image:linear-gradient(#8fa3c8 50%,transparent 50%);background-size:1px 3px"></div>
<div class="a" style="left:85px;top:53px;width:1px;height:17px;background-image:linear-gradient(#8fa3c8 50%,transparent 50%);background-size:1px 3px"></div>
<div class="a" style="left:127px;top:53px;width:1px;height:17px;background-image:linear-gradient(#8fa3c8 50%,transparent 50%);background-size:1px 3px"></div>
<div class="a" style="left:310px;top:53px;width:1px;height:17px;background-image:linear-gradient(#8fa3c8 50%,transparent 50%);background-size:1px 3px"></div>
<div class="a" style="left:352px;top:53px;width:1px;height:17px;background-image:linear-gradient(#8fa3c8 50%,transparent 50%);background-size:1px 3px"></div>
<div class="a" style="left:1830px;top:53px;width:1px;height:17px;background-image:linear-gradient(#8fa3c8 50%,transparent 50%);background-size:1px 3px"></div>
<svg class="a" style="left:15px;top:48px;" width="27" height="27" viewBox="0 0 27 27"><path d="M4.5 1h14l6.5 6.5v17h-20.5z" fill="#f6f6f4" stroke="#3c3c3c" stroke-width="1.6"/><path d="M18.5 1v6.5h6.5" fill="#e4e4e2" stroke="#3c3c3c" stroke-width="1"/><text x="6.2" y="11.3" font-family="Liberation Sans, sans-serif" font-weight="bold" font-size="9" fill="#3c3c3c" textLength="15" lengthAdjust="spacingAndGlyphs">SQL</text><circle cx="6.8" cy="20.1" r="6.2" fill="#3c3c3c"/><path d="M3.1999999999999997 20.1h7.2M6.8 16.5v7.2" stroke="#f2f2f2" stroke-width="2.4"/></svg>
<svg class="a" style="left:49px;top:48px;" width="28" height="27" viewBox="0 0 28 27"><g transform="translate(1,0)"><path d="M4.5 1h14l6.5 6.5v17h-20.5z" fill="#f6f6f4" stroke="#3c3c3c" stroke-width="1.6"/><path d="M18.5 1v6.5h6.5" fill="#e4e4e2" stroke="#3c3c3c" stroke-width="1"/><text x="6.2" y="11.3" font-family="Liberation Sans, sans-serif" font-weight="bold" font-size="9" fill="#3c3c3c" textLength="15" lengthAdjust="spacingAndGlyphs">SQL</text></g><path d="M5 14h5.5l1.5 2h4.5v9.5h-11.5z" fill="#f6f6f4" stroke="#3c3c3c" stroke-width="1.3"/><path d="M1.5 19h12l2.5 6.5h-11.5z" fill="#3c3c3c"/></svg>
<svg class="a" style="left:92px;top:46px;" width="26" height="29" viewBox="0 0 26 29"><path d="M6 5.5v9a5.2 2.3 0 0 0 10.4 0v-9" fill="#f4f4f2" stroke="#8a8a8a" stroke-width="1"/><ellipse cx="11.2" cy="5.5" rx="5.2" ry="2.5" fill="#fafafa" stroke="#8a8a8a"/><rect x="11.5" y="8.8" width="12" height="12" fill="#f4f4f2" stroke="#7a7a7a"/><path d="M11.5 12.5h12M11.5 15.5h12M11.5 18h12M15.5 8.8v12M19.5 8.8v12" stroke="#9a9a9a" stroke-width=".8"/><rect x="11.5" y="8.8" width="12" height="2" fill="#6a6a6a"/><circle cx="9.3" cy="19.8" r="7.2" fill="#3c3c3c"/><text x="6.6" y="25" font-family="Liberation Serif, serif" font-style="italic" font-weight="bold" font-size="14" fill="#f4f4f4">i</text></svg>
<svg class="a" style="left:134px;top:47px;" width="28" height="27" viewBox="0 0 28 27"><path d="M7 6v15.500a9.800 3.400 0 0 0 19.600 0v-15.500" fill="#f8f8f6" stroke="#4a4a4a" stroke-width="1.250"/><ellipse cx="16.800" cy="6" rx="9.800" ry="3.800" fill="#f8f8f6" stroke="#4a4a4a" stroke-width="1.250"/><path d="M7 13.500a9.800 3.400 0 0 0 19.600 0" fill="none" stroke="#4a4a4a" stroke-width="1.250"/><circle cx="7.5" cy="20.5" r="6" fill="#3c3c3c"/><path d="M3.9 20.5h7.2M7.5 16.9v7.2" stroke="#f2f2f2" stroke-width="2.4"/></svg>
<svg class="a" style="left:168px;top:47px;" width="31" height="27" viewBox="0 0 31 27"><g transform="translate(2.6,0.4)"><rect x="4" y="3" width="20.5" height="20" fill="#f6f6f4" stroke="#5a5a5a" stroke-width="1.2"/><rect x="3.4" y="2.4" width="21.7" height="2.6" fill="#4a4a4a"/><path d="M7 7.5h4M12.5 7.5h4M18 7.5h4M7 10.5h4M12.5 10.5h4M18 10.5h4M7 13.5h4M12.5 13.5h4M18 13.5h4M7 16.5h4M12.5 16.5h4M18 16.5h4M12.5 19.5h4M18 19.5h4" stroke="#555" stroke-width="1.7"/></g><circle cx="8.6" cy="20.6" r="6" fill="#3c3c3c"/><path d="M5.0 20.6h7.2M8.6 17.0v7.2" stroke="#f2f2f2" stroke-width="2.4"/></svg>
<svg class="a" style="left:203px;top:47px;" width="31" height="27" viewBox="0 0 31 27"><g transform="translate(2.6,0.4)"><rect x="4" y="3" width="20.5" height="20" fill="#f6f6f4" stroke="#5a5a5a" stroke-width="1.2"/><rect x="3.4" y="2.4" width="21.7" height="2.6" fill="#4a4a4a"/><rect x="8.5" y="8" width="8" height="7.5" fill="#ececea" stroke="#6a6a6a" stroke-width="1.1"/><rect x="13.5" y="11.5" width="8" height="7.5" fill="#ececea" stroke="#6a6a6a" stroke-width="1.1"/></g><circle cx="8.6" cy="20.6" r="6" fill="#3c3c3c"/><path d="M5.0 20.6h7.2M8.6 17.0v7.2" stroke="#f2f2f2" stroke-width="2.4"/></svg>
<svg class="a" style="left:238px;top:47px;" width="31" height="27" viewBox="0 0 31 27"><g transform="translate(2.6,0.4)"><rect x="4" y="3" width="20.5" height="20" fill="#f6f6f4" stroke="#5a5a5a" stroke-width="1.2"/><rect x="3.4" y="2.4" width="21.7" height="2.6" fill="#4a4a4a"/><rect x="8" y="8.5" width="3.6" height="3.6" fill="#fff" stroke="#444" stroke-width="1.1"/><rect x="16" y="16" width="3.6" height="3.6" fill="#fff" stroke="#444" stroke-width="1.1"/><path d="M17.8 7l3 3.3-3 3.3-3-3.3z" fill="#fff" stroke="#888" stroke-width=".9"/><path d="M11.6 10.3h3.2M17.8 13.6v2.4" stroke="#555" stroke-width=".9"/></g><circle cx="8.6" cy="20.6" r="6" fill="#3c3c3c"/><path d="M5.0 20.6h7.2M8.6 17.0v7.2" stroke="#f2f2f2" stroke-width="2.4"/></svg>
<svg class="a" style="left:273px;top:47px;" width="31" height="27" viewBox="0 0 31 27"><g transform="translate(2.6,0.4)"><rect x="4" y="3" width="20.5" height="20" fill="#f6f6f4" stroke="#5a5a5a" stroke-width="1.2"/><rect x="3.4" y="2.4" width="21.7" height="2.6" fill="#4a4a4a"/><text x="9.5" y="19" font-family="Liberation Serif, serif" font-size="12.5" fill="#8c8c8c" textLength="13" lengthAdjust="spacingAndGlyphs">f()</text></g><circle cx="8.6" cy="20.6" r="6" fill="#3c3c3c"/><path d="M5.0 20.6h7.2M8.6 17.0v7.2" stroke="#f2f2f2" stroke-width="2.4"/></svg>
<svg class="a" style="left:316px;top:47px;" width="28" height="28" viewBox="0 0 28 28"><rect x="3.5" y="3" width="21" height="20" fill="#f6f6f4" stroke="#5a5a5a" stroke-width="1.2"/><rect x="2.9" y="2.4" width="22.2" height="2.6" fill="#4a4a4a"/><path d="M6 7.5h4.5M12 7.5h4.5M18 7.5h4.5M6 10.5h4.5M6 13.5h4.5M6 16.5h4.5M6 19.5h4.5M12 19.5h3" stroke="#555" stroke-width="1.7"/><circle cx="16.5" cy="14.5" r="4.6" fill="#f6f6f4" stroke="#3a3a3a" stroke-width="2"/><path d="M20 18l5.5 5.5" stroke="#3a3a3a" stroke-width="2.6"/></svg>
<svg class="a" style="left:359px;top:46px;" width="28" height="30" viewBox="0 0 28 30"><path d="M12.5 4v13a5.5 2 0 0 0 11 0v-13" fill="#f6f6f6" stroke="#8a8a8a" stroke-width="1"/><ellipse cx="18" cy="4.3" rx="5.5" ry="2.2" fill="#fafafa" stroke="#8a8a8a"/><path d="M12.5 8.5a5.5 2 0 0 0 11 0M12.5 13a5.5 2 0 0 0 11 0" fill="none" stroke="#8a8a8a"/><path d="M13 21.5h13" stroke="#4a4a4a" stroke-width="1.4"/><path d="M11 21.5l5-2.6v5.2z" fill="#4a4a4a"/><path d="M2 19.5l4-5 4 5h-2.6v4h-2.8v-4z" fill="#3a3a3a"/><path d="M8 23l4 5 4-5h-2.6v-3.5h-2.8v3.5z" fill="#3a3a3a"/></svg>
<svg class="a" style="left:1796px;top:48.5px;" width="24" height="24" viewBox="0 0 24 24"><circle cx="12" cy="12" r="10" fill="none" stroke="#3c3c3c" stroke-width="2.200" stroke-dasharray="1.900 1.240"/><circle cx="12" cy="12" r="7.900" fill="#f5f5f7" stroke="#3a3a3a" stroke-width="2.800"/><circle cx="12" cy="10" r="2.500" fill="none" stroke="#3a3a3a" stroke-width="1.600"/><path d="M7.300 16.800a5 4.400 0 0 1 9.400 0" fill="none" stroke="#3a3a3a" stroke-width="1.600"/></svg>
<svg class="a" style="left:332px;top:118px;" width="16" height="14" viewBox="0 0 16 14"><path d="M3 7a5 5 0 0 1 8.5-3.2" fill="none" stroke="#4d6d96" stroke-width="2.2"/><path d="M13 7a5 5 0 0 1-8.5 3.2" fill="none" stroke="#4d6d96" stroke-width="2.2"/><path d="M9.5 1.5l4.5.8-2 4z" fill="#4d6d96"/><path d="M6.500 12.500l-4.500-.8 2-4z" fill="#4d6d96"/></svg>
<svg class="a" style="left:11px;top:146px;" width="14" height="14" viewBox="0 0 14 14"><circle cx="5.2" cy="5.2" r="3.4" fill="none" stroke="#6a6a6a" stroke-width="1.7"/><path d="M7.8 7.8l4 4" stroke="#6a6a6a" stroke-width="2.2"/></svg>
<svg class="a" style="left:13.5px;top:177px;" width="12" height="12" viewBox="0 0 12 12"><polygon points="0.5,0.3 10.8,6 0.5,11.700" fill="#36455f"/></svg>
<svg class="a" style="left:31px;top:173px;" width="17" height="19" viewBox="0 0 17 19"><path d="M1.500 3.800v10.500a7 2.700 0 0 0 14 0v-10.500" fill="#f0f0f0" stroke="#c4c4c4" stroke-width="1.200"/><ellipse cx="8.500" cy="3.800" rx="7" ry="2.700" fill="#fafafa" stroke="#c4c4c4" stroke-width="1.200"/><path d="M1.500 7.300a7 2.700 0 0 0 14 0M1.500 10.800a7 2.700 0 0 0 14 0" fill="none" stroke="#c4c4c4" stroke-width="1.200"/></svg>
<svg class="a" style="left:13px;top:198px;" width="13" height="11" viewBox="0 0 13 11"><polygon points="0.5,1 12.500,1 6.500,10.500" fill="#36455f"/></svg>
<svg class="a" style="left:31px;top:193px;" width="17" height="19" viewBox="0 0 17 19"><path d="M1.500 3.800v10.500a7 2.700 0 0 0 14 0v-10.500" fill="#dedede" stroke="#8e8e8e" stroke-width="1.200"/><ellipse cx="8.500" cy="3.800" rx="7" ry="2.700" fill="#fafafa" stroke="#8e8e8e" stroke-width="1.200"/><path d="M1.500 7.300a7 2.700 0 0 0 14 0M1.500 10.800a7 2.700 0 0 0 14 0" fill="none" stroke="#8e8e8e" stroke-width="1.200"/></svg>
<svg class="a" style="left:37px;top:218px;" width="13" height="11" viewBox="0 0 13 11"><polygon points="0.5,1 12.500,1 6.500,10.500" fill="#36455f"/></svg>
<svg class="a" style="left:53px;top:214px;" width="20" height="19" viewBox="0 0 20 19"><rect x="0.600" y="0.600" width="11" height="9" fill="#e8e8e8" stroke="#7a7a7a" stroke-width="1.100"/><rect x="0.600" y="0.600" width="11" height="2" fill="#6a6a6a"/><rect x="7" y="3" width="11" height="9" fill="#e8e8e8" stroke="#7a7a7a" stroke-width="1.100"/><rect x="7" y="3" width="11" height="2" fill="#6a6a6a"/><rect x="3.500" y="6.500" width="11" height="11" fill="#f4f4f4" stroke="#6a6a6a" stroke-width="1.100"/><rect x="3.500" y="6.500" width="11" height="2.200" fill="#6a6a6a"/><path d="M4 11h10M4 13.200h10M4 15.400h10M7 9v8M10.500 9v8" stroke="#a0a0a0" stroke-width=".8"/></svg>
<div class="a" style="left:6px;top:233px;width:337px;height:353px;overflow:hidden">
<svg class="a" style="left:55.5px;top:4px;" width="12" height="12" viewBox="0 0 12 12"><polygon points="0.5,0.3 10.8,6 0.5,11.700" fill="#36455f"/></svg>
<svg class="a" style="left:72.3px;top:0.6px;" width="16" height="17" viewBox="0 0 16 17"><rect x="0.800" y="0.800" width="14.400" height="15.400" fill="#f4f4f4" stroke="#7a7a7a" stroke-width="1.200"/><rect x="0.800" y="0.800" width="14.400" height="2.200" fill="#7a7a7a"/><path d="M2 5.500h12M2 8h12M2 10.500h12M2 13h12M5.500 3v13M10 3v13" stroke="#a4a4a4" stroke-width="1"/></svg>
<svg class="a" style="left:55.5px;top:24px;" width="12" height="12" viewBox="0 0 12 12"><polygon points="0.5,0.3 10.8,6 0.5,11.700" fill="#36455f"/></svg>
<svg class="a" style="left:72.3px;top:20.6px;" width="16" height="17" viewBox="0 0 16 17"><rect x="0.800" y="0.800" width="14.400" height="15.400" fill="#f4f4f4" stroke="#7a7a7a" stroke-width="1.200"/><rect x="0.800" y="0.800" width="14.400" height="2.200" fill="#7a7a7a"/><path d="M2 5.500h12M2 8h12M2 10.500h12M2 13h12M5.500 3v13M10 3v13" stroke="#a4a4a4" stroke-width="1"/></svg>
<svg class="a" style="left:55.5px;top:44px;" width="12" height="12" viewBox="0 0 12 12"><polygon points="0.5,0.3 10.8,6 0.5,11.700" fill="#36455f"/></svg>
<svg class="a" style="left:72.3px;top:40.6px;" width="16" height="17" viewBox="0 0 16 17"><rect x="0.800" y="0.800" width="14.400" height="15.400" fill="#f4f4f4" stroke="#7a7a7a" stroke-width="1.200"/><rect x="0.800" y="0.800" width="14.400" height="2.200" fill="#7a7a7a"/><path d="M2 5.500h12M2 8h12M2 10.500h12M2 13h12M5.500 3v13M10 3v13" stroke="#a4a4a4" stroke-width="1"/></svg>
<svg class="a" style="left:55.5px;top:64px;" width="12" height="12" viewBox="0 0 12 12"><polygon points="0.5,0.3 10.8,6 0.5,11.700" fill="#36455f"/></svg>
<svg class="a" style="left:72.3px;top:60.6px;" width="16" height="17" viewBox="0 0 16 17"><rect x="0.800" y="0.800" width="14.400" height="15.400" fill="#f4f4f4" stroke="#7a7a7a" stroke-width="1.200"/><rect x="0.800" y="0.800" width="14.400" height="2.200" fill="#7a7a7a"/><path d="M2 5.500h12M2 8h12M2 10.500h12M2 13h12M5.500 3v13M10 3v13" stroke="#a4a4a4" stroke-width="1"/></svg>
<svg class="a" style="left:55.5px;top:84px;" width="12" height="12" viewBox="0 0 12 12"><polygon points="0.5,0.3 10.8,6 0.5,11.700" fill="#36455f"/></svg>
<svg class="a" style="left:72.3px;top:80.6px;" width="16" height="17" viewBox="0 0 16 17"><rect x="0.800" y="0.800" width="14.400" height="15.400" fill="#f4f4f4" stroke="#7a7a7a" stroke-width="1.200"/><rect x="0.800" y="0.800" width="14.400" height="2.200" fill="#7a7a7a"/><path d="M2 5.500h12M2 8h12M2 10.500h12M2 13h12M5.500 3v13M10 3v13" stroke="#a4a4a4" stroke-width="1"/></svg>
<svg class="a" style="left:55.5px;top:104px;" width="12" height="12" viewBox="0 0 12 12"><polygon points="0.5,0.3 10.8,6 0.5,11.700" fill="#36455f"/></svg>
<svg class="a" style="left:72.3px;top:100.6px;" width="16" height="17" viewBox="0 0 16 17"><rect x="0.800" y="0.800" width="14.400" height="15.400" fill="#f4f4f4" stroke="#7a7a7a" stroke-width="1.200"/><rect x="0.800" y="0.800" width="14.400" height="2.200" fill="#7a7a7a"/><path d="M2 5.500h12M2 8h12M2 10.500h12M2 13h12M5.500 3v13M10 3v13" stroke="#a4a4a4" stroke-width="1"/></svg>
<svg class="a" style="left:55.5px;top:124px;" width="12" height="12" viewBox="0 0 12 12"><polygon points="0.5,0.3 10.8,6 0.5,11.700" fill="#36455f"/></svg>
<svg class="a" style="left:72.3px;top:120.6px;" width="16" height="17" viewBox="0 0 16 17"><rect x="0.800" y="0.800" width="14.400" height="15.400" fill="#f4f4f4" stroke="#7a7a7a" stroke-width="1.200"/><rect x="0.800" y="0.800" width="14.400" height="2.200" fill="#7a7a7a"/><path d="M2 5.500h12M2 8h12M2 10.500h12M2 13h12M5.500 3v13M10 3v13" stroke="#a4a4a4" stroke-width="1"/></svg>
<svg class="a" style="left:55.5px;top:144px;" width="12" height="12" viewBox="0 0 12 12"><polygon points="0.5,0.3 10.8,6 0.5,11.700" fill="#36455f"/></svg>
<svg class="a" style="left:72.3px;top:140.6px;" width="16" height="17" viewBox="0 0 16 17"><rect x="0.800" y="0.800" width="14.400" height="15.400" fill="#f4f4f4" stroke="#7a7a7a" stroke-width="1.200"/><rect x="0.800" y="0.800" width="14.400" height="2.200" fill="#7a7a7a"/><path d="M2 5.500h12M2 8h12M2 10.500h12M2 13h12M5.500 3v13M10 3v13" stroke="#a4a4a4" stroke-width="1"/></svg>
<svg class="a" style="left:55.5px;top:164px;" width="12" height="12" viewBox="0 0 12 12"><polygon points="0.5,0.3 10.8,6 0.5,11.700" fill="#36455f"/></svg>
<svg class="a" style="left:72.3px;top:160.6px;" width="16" height="17" viewBox="0 0 16 17"><rect x="0.800" y="0.800" width="14.400" height="15.400" fill="#f4f4f4" stroke="#7a7a7a" stroke-width="1.200"/><rect x="0.800" y="0.800" width="14.400" height="2.200" fill="#7a7a7a"/><path d="M2 5.500h12M2 8h12M2 10.500h12M2 13h12M5.500 3v13M10 3v13" stroke="#a4a4a4" stroke-width="1"/></svg>
<svg class="a" style="left:55.5px;top:184px;" width="12" height="12" viewBox="0 0 12 12"><polygon points="0.5,0.3 10.8,6 0.5,11.700" fill="#36455f"/></svg>
<svg class="a" style="left:72.3px;top:180.6px;" width="16" height="17" viewBox="0 0 16 17"><rect x="0.800" y="0.800" width="14.400" height="15.400" fill="#f4f4f4" stroke="#7a7a7a" stroke-width="1.200"/><rect x="0.800" y="0.800" width="14.400" height="2.200" fill="#7a7a7a"/><path d="M2 5.500h12M2 8h12M2 10.500h12M2 13h12M5.500 3v13M10 3v13" stroke="#a4a4a4" stroke-width="1"/></svg>
<svg class="a" style="left:55.5px;top:204px;" width="12" height="12" viewBox="0 0 12 12"><polygon points="0.5,0.3 10.8,6 0.5,11.700" fill="#36455f"/></svg>
<svg class="a" style="left:72.3px;top:200.6px;" width="16" height="17" viewBox="0 0 16 17"><rect x="0.800" y="0.800" width="14.400" height="15.400" fill="#f4f4f4" stroke="#7a7a7a" stroke-width="1.200"/><rect x="0.800" y="0.800" width="14.400" height="2.200" fill="#7a7a7a"/><path d="M2 5.500h12M2 8h12M2 10.500h12M2 13h12M5.500 3v13M10 3v13" stroke="#a4a4a4" stroke-width="1"/></svg>
<svg class="a" style="left:55.5px;top:224px;" width="12" height="12" viewBox="0 0 12 12"><polygon points="0.5,0.3 10.8,6 0.5,11.700" fill="#36455f"/></svg>
<svg class="a" style="left:72.3px;top:220.6px;" width="16" height="17" viewBox="0 0 16 17"><rect x="0.800" y="0.800" width="14.400" height="15.400" fill="#f4f4f4" stroke="#7a7a7a" stroke-width="1.200"/><rect x="0.800" y="0.800" width="14.400" height="2.200" fill="#7a7a7a"/><path d="M2 5.500h12M2 8h12M2 10.500h12M2 13h12M5.500 3v13M10 3v13" stroke="#a4a4a4" stroke-width="1"/></svg>
<svg class="a" style="left:55.5px;top:244px;" width="12" height="12" viewBox="0 0 12 12"><polygon points="0.5,0.3 10.8,6 0.5,11.700" fill="#36455f"/></svg>
<svg class="a" style="left:72.3px;top:240.6px;" width="16" height="17" viewBox="0 0 16 17"><rect x="0.800" y="0.800" width="14.400" height="15.400" fill="#f4f4f4" stroke="#7a7a7a" stroke-width="1.200"/><rect x="0.800" y="0.800" width="14.400" height="2.200" fill="#7a7a7a"/><path d="M2 5.500h12M2 8h12M2 10.500h12M2 13h12M5.500 3v13M10 3v13" stroke="#a4a4a4" stroke-width="1"/></svg>
<svg class="a" style="left:55.5px;top:264px;" width="12" height="12" viewBox="0 0 12 12"><polygon points="0.5,0.3 10.8,6 0.5,11.700" fill="#36455f"/></svg>
<svg class="a" style="left:72.3px;top:260.6px;" width="16" height="17" viewBox="0 0 16 17"><rect x="0.800" y="0.800" width="14.400" height="15.400" fill="#f4f4f4" stroke="#7a7a7a" stroke-width="1.200"/><rect x="0.800" y="0.800" width="14.400" height="2.200" fill="#7a7a7a"/><path d="M2 5.500h12M2 8h12M2 10.500h12M2 13h12M5.500 3v13M10 3v13" stroke="#a4a4a4" stroke-width="1"/></svg>
<svg class="a" style="left:55.5px;top:284px;" width="12" height="12" viewBox="0 0 12 12"><polygon points="0.5,0.3 10.8,6 0.5,11.700" fill="#36455f"/></svg>
<svg class="a" style="left:72.3px;top:280.6px;" width="16" height="17" viewBox="0 0 16 17"><rect x="0.800" y="0.800" width="14.400" height="15.400" fill="#f4f4f4" stroke="#7a7a7a" stroke-width="1.200"/><rect x="0.800" y="0.800" width="14.400" height="2.200" fill="#7a7a7a"/><path d="M2 5.500h12M2 8h12M2 10.500h12M2 13h12M5.500 3v13M10 3v13" stroke="#a4a4a4" stroke-width="1"/></svg>
<svg class="a" style="left:55.5px;top:304px;" width="12" height="12" viewBox="0 0 12 12"><polygon points="0.5,0.3 10.8,6 0.5,11.700" fill="#36455f"/></svg>
<svg class="a" style="left:72.3px;top:300.6px;" width="16" height="17" viewBox="0 0 16 17"><rect x="0.800" y="0.800" width="14.400" height="15.400" fill="#f4f4f4" stroke="#7a7a7a" stroke-width="1.200"/><rect x="0.800" y="0.800" width="14.400" height="2.200" fill="#7a7a7a"/><path d="M2 5.500h12M2 8h12M2 10.500h12M2 13h12M5.500 3v13M10 3v13" stroke="#a4a4a4" stroke-width="1"/></svg>
<svg class="a" style="left:55.5px;top:324px;" width="12" height="12" viewBox="0 0 12 12"><polygon points="0.5,0.3 10.8,6 0.5,11.700" fill="#36455f"/></svg>
<svg class="a" style="left:72.3px;top:320.6px;" width="16" height="17" viewBox="0 0 16 17"><rect x="0.800" y="0.800" width="14.400" height="15.400" fill="#f4f4f4" stroke="#7a7a7a" stroke-width="1.200"/><rect x="0.800" y="0.800" width="14.400" height="2.200" fill="#7a7a7a"/><path d="M2 5.500h12M2 8h12M2 10.500h12M2 13h12M5.500 3v13M10 3v13" stroke="#a4a4a4" stroke-width="1"/></svg>
<svg class="a" style="left:55.5px;top:344px;" width="12" height="12" viewBox="0 0 12 12"><polygon points="0.5,0.3 10.8,6 0.5,11.700" fill="#36455f"/></svg>
<svg class="a" style="left:72.3px;top:340.6px;" width="16" height="17" viewBox="0 0 16 17"><rect x="0.800" y="0.800" width="14.400" height="15.400" fill="#f4f4f4" stroke="#7a7a7a" stroke-width="1.200"/><rect x="0.800" y="0.800" width="14.400" height="2.200" fill="#7a7a7a"/><path d="M2 5.500h12M2 8h12M2 10.500h12M2 13h12M5.500 3v13M10 3v13" stroke="#a4a4a4" stroke-width="1"/></svg>
</div>
<svg width="0" height="0" style="position:absolute"><defs><linearGradient id="gb" x1="0" y1="0" x2="1" y2="1"><stop offset="0" stop-color="#fbf4c4"/><stop offset=".5" stop-color="#e6d062"/><stop offset="1" stop-color="#b4922c"/></linearGradient><linearGradient id="gf" x1="0" y1="0" x2="0" y2="1"><stop offset="0" stop-color="#a9c6df"/><stop offset="1" stop-color="#6d9bc2"/></linearGradient><linearGradient id="gs" x1="0" y1="0" x2="0" y2="1"><stop offset="0" stop-color="#4f86b8"/><stop offset="1" stop-color="#2f5f8f"/></linearGradient></defs></svg>
<svg class="a" style="left:386px;top:118px;" width="22" height="20" viewBox="0 0 22 20"><path d="M1 4.500q0-2 2-2h4.500l1.500 2h10q1.500 0 1.500 1.500v11q0 1.500-1.500 1.500h-16.500q-1.500 0-1.500-1.500z" fill="url(#gf)" stroke="#5d88ae" stroke-width="1"/><path d="M1.500 6.500h19" stroke="#c4d8ea" stroke-width="1"/></svg>
<svg class="a" style="left:421px;top:120px;" width="18" height="18" viewBox="0 0 18 18"><path d="M1 2q0-1 1-1h13l2 2v13q0 1-1 1h-14q-1 0-1-1z" fill="url(#gs)" stroke="#2a557f" stroke-width="1"/><rect x="4" y="1.500" width="9.500" height="6" fill="#e6eef6"/><rect x="4.500" y="10.500" width="9" height="6" fill="#d4e0ec"/><rect x="10" y="11.500" width="2.200" height="4" fill="#3d6f9e"/></svg>
<div class="a" style="left:452px;top:121px;width:1px;height:16px;background:#9a9a9a;"></div>
<svg class="a" style="left:461px;top:117px;" width="22" height="25" viewBox="0 0 22 25"><path d="M7.200 1.200L19.100 1.400L13.800 7.400L20.100 7.400L3.500 22.200L9.200 12.100L2 12.100Z" fill="url(#gb)" stroke="#a8883a" stroke-width="1"/><path d="M3 23.800l8-1.200" stroke="#dcdcdc" stroke-width="1.500"/></svg>
<svg class="a" style="left:495px;top:117px;" width="24" height="25" viewBox="0 0 24 25"><path d="M7.200 1.200L19.100 1.400L13.800 7.400L20.100 7.400L3.500 22.200L9.200 12.100L2 12.100Z" fill="url(#gb)" stroke="#a8883a" stroke-width="1"/><path d="M3 23.800l8-1.200" stroke="#dcdcdc" stroke-width="1.500"/><path d="M12 9.500h6M15 9.500v11M12 20.500h6" stroke="#4a4a4a" stroke-width="2.200"/><path d="M15 10v10" stroke="#e8e8e8" stroke-width=".8"/></svg>
<svg class="a" style="left:527px;top:117px;" width="26" height="25" viewBox="0 0 26 25"><g opacity=".85"><path d="M7.200 1.200L19.100 1.400L13.800 7.400L20.100 7.400L3.500 22.200L9.200 12.100L2 12.100Z" fill="url(#gb)" stroke="#a8883a" stroke-width="1"/><path d="M3 23.800l8-1.200" stroke="#dcdcdc" stroke-width="1.500"/></g><circle cx="14" cy="10.500" r="6" fill="#eaf2fa" stroke="#6a6a6a" stroke-width="1.600"/><circle cx="14" cy="8" r="1.700" fill="#6aa0d8"/><circle cx="11.500" cy="12.500" r="1.700" fill="#6aa0d8"/><circle cx="16.500" cy="12.500" r="1.700" fill="#6aa0d8"/><path d="M18.500 15l5 5.500" stroke="#4a4a4a" stroke-width="2.600"/></svg>
<svg class="a" style="left:561px;top:118px;" width="23" height="23" viewBox="0 0 23 23"><path d="M7 1h9l6 6v9l-6 6h-9l-6-6v-9z" fill="#c9c9c9" stroke="#bdbdbd"/><path d="M7.500 11v-4.500M10 10.500v-6M12.500 10.500v-6M15 11v-5" stroke="#efefef" stroke-width="1.900" stroke-linecap="round"/><path d="M6.500 10.500h9.500v3.500q0 4-4.500 4-3 0-5-3.500z" fill="#efefef"/><path d="M16 12.500q2.500-2.500 3.500-1.500-1 2.500-3.500 5z" fill="#efefef"/></svg>
<div class="a" style="left:595px;top:121px;width:1px;height:16px;background:#9a9a9a;"></div>
<svg class="a" style="left:603px;top:118px;" width="21" height="22" viewBox="0 0 21 22"><rect x=".6" y=".6" width="19.800" height="20.800" rx="2.500" fill="#e2e2e2" stroke="#9a9a9a" stroke-width="1.200"/><circle cx="6.500" cy="7" r="5" fill="#d21f36"/><path d="M4.500 5l4 4M8.500 5l-4 4" stroke="#fff" stroke-width="1.500"/><circle cx="14" cy="13.500" r="5.600" fill="#e2401e" stroke="#f4c8c0" stroke-width=".8"/><path d="M12 11.500v4q2 2.500 4 0v-3.500" fill="#fff" stroke="#fff" stroke-width="1.200"/><path d="M3.500 15v3h3" stroke="#555" stroke-width="1.100" fill="none"/></svg>
<div class="a" style="left:636px;top:121px;width:1px;height:16px;background:#9a9a9a;"></div>
<svg class="a" style="left:644px;top:118px;" width="22" height="22" viewBox="0 0 22 22"><circle cx="11" cy="11" r="10.300" fill="#c6c6c6"/><path d="M6 11.500l3.500 3.500 6.500-7" fill="none" stroke="#ececec" stroke-width="2.600"/></svg>
<svg class="a" style="left:678px;top:118px;" width="22" height="22" viewBox="0 0 22 22"><circle cx="11" cy="11" r="10.300" fill="#c6c6c6"/><path d="M7 7l8 8M15 7l-8 8" stroke="#ececec" stroke-width="2.800"/></svg>
<div class="a" style="left:709px;top:116px;width:29px;height:27px;background:#eaf1fa;border:1.500px solid #1a73d0"></div>
<svg class="a" style="left:712px;top:119px;" width="22" height="20" viewBox="0 0 22 20"><rect x=".5" y=".5" width="20.500" height="19" rx="2.500" fill="#d4d4d4" stroke="#a8a8a8"/><path d="M7.500 2h7l-3.500 5.500h3.500l-8.500 9.500 2.500-7h-3.500z" fill="#f2d560" stroke="#c09a30" stroke-width=".8"/><circle cx="14" cy="13.500" r="4.300" fill="#4f8fe0" stroke="#a4c4f0" stroke-width=".8"/><path d="M12 13.500l1.500 1.600 2.600-3" fill="none" stroke="#fff" stroke-width="1.300"/><circle cx="16.500" cy="3.500" r="1.200" fill="#4ab04a"/></svg>
<div class="a" style="left:745px;top:121px;width:1px;height:16px;background:#9a9a9a;"></div>
<svg class="a" style="left:889px;top:126px;" width="9" height="6" viewBox="0 0 9 6"><polygon points="0.500,0.800 8.500,0.800 4.500,5.200" fill="#111"/></svg>
<div class="a" style="left:908px;top:121px;width:1px;height:16px;background:#9a9a9a;"></div>
<svg class="a" style="left:917px;top:119px;" width="24" height="24" viewBox="0 0 24 24"><path d="M10 1.500l2.700 6 6.300.7-4.700 4.300 1.300 6.300-5.600-3.300-5.600 3.300 1.300-6.300-4.700-4.300 6.300-.7z" fill="#f4c83c" stroke="#d09a20" stroke-width="1"/><path d="M15.300 11.500h3.600v3.200h3.200v3.600h-3.200v3.200h-3.600v-3.200h-3.200v-3.600h3.200z" fill="#8cd05a" stroke="#3c9a22" stroke-width="1.100"/></svg>
<div class="a" style="left:950px;top:121px;width:1px;height:16px;background:#9a9a9a;"></div>
<svg class="a" style="left:957px;top:118px;" width="25" height="24" viewBox="0 0 25 24"><ellipse cx="11.500" cy="21.500" rx="9" ry="1.200" fill="#d6d6d6"/><path d="M2 10.500l14.500-5.500 4.500 6.500-2 6-8.500 1.500z" fill="#d8b878" stroke="#a88a4a" stroke-width=".9"/><path d="M5 11l6 7M8 9.800l6 7.200M11 8.700l5.500 7M14 7.500l4.500 6.500" stroke="#b8944e" stroke-width=".9"/><path d="M16 5.500l4.800 6.300" stroke="#8a8a86" stroke-width="2.200"/><path d="M17.500 6.500l4.500-3.500" stroke="#a86a2a" stroke-width="3.400" stroke-linecap="round"/></svg>
<svg class="a" style="left:991px;top:120px;" width="22" height="20" viewBox="0 0 22 20"><circle cx="8.500" cy="8" r="6" fill="#f4f4f4" stroke="#8a8a8a" stroke-width="1.600"/><text x="5.500" y="11" font-size="8" font-family="Liberation Sans, sans-serif" fill="#9a9a9a">A</text><path d="M13 12.500l7 6.500" stroke="#6a6a6a" stroke-width="2.600"/></svg>
<svg class="a" style="left:1025px;top:118px;" width="23" height="23" viewBox="0 0 23 23"><rect x=".8" y=".8" width="21.400" height="21.400" rx="2.500" fill="#e8e8e8" stroke="#8a8a8a" stroke-width="1.300"/><text x="6" y="18" font-size="17" font-family="Liberation Sans, sans-serif" font-weight="bold" fill="#3a3a3a">¶</text></svg>
<svg class="a" style="left:1058px;top:118px;" width="23" height="23" viewBox="0 0 23 23"><rect x=".8" y=".8" width="21.400" height="21.400" rx="2.500" fill="#ececec" stroke="#8a8a8a" stroke-width="1.300"/><path d="M6.500 7.500h10v6h-6" fill="none" stroke="#4a4a4a" stroke-width="1.600"/><path d="M11.500 10.500l-3.500 3 3.500 3z" fill="#4a4a4a"/></svg>
<svg class="a" style="left:375px;top:356px;" width="10" height="12" viewBox="0 0 10 12"><polygon points="8.500,1 1.500,6 8.500,11" fill="#7a7a7a"/></svg>
<svg class="a" style="left:1583px;top:356px;" width="10" height="12" viewBox="0 0 10 12"><polygon points="1.500,1 8.500,6 1.500,11" fill="#7a7a7a"/></svg>
<svg class="a" style="left:1553px;top:90px;" width="40" height="17" viewBox="0 0 40 17"><path d="M11.500 1.500l-8 7 8 7z" fill="#1f5fd0"/><path d="M11.500 4v9l2.500-4.500z" fill="#7aa8f0"/><path d="M27.500 1.500l8 7-8 7z" fill="#1f5fd0"/><path d="M27.500 4v9l-2.500-4.500z" fill="#7aa8f0"/></svg>
<svg class="a" style="left:468px;top:386px;" width="19" height="19" viewBox="0 0 19 19"><rect x="1.200" y="1.200" width="16.600" height="16.600" fill="#ffffff" stroke="#a8b0ba" stroke-width="1.400"/><path d="M1 5.500h17M1 9.500h17M1 13.500h17" stroke="#b0b8c2" stroke-width="1.300"/><rect x="6.300" y="1" width="6.200" height="17" fill="#fde85a" stroke="#e0a81a" stroke-width="1.400"/></svg>
<svg class="a" style="left:504px;top:387.5px;" width="22" height="18" viewBox="0 0 22 18"><path d="M5.300 2.300L10.300 8.200L7.600 8.200Q7.800 13 11 16.300Q4 15 3.300 8.200L0.100 8.200Z" fill="#4a98e6"/><path d="M15.400 14.800L10.400 9L13.200 9Q13 4.300 9.800 0.800Q16.800 2.200 17.500 9L20.400 9Z" fill="#3a74e0"/></svg>
<svg class="a" style="left:775px;top:384px;" width="26" height="23" viewBox="0 0 26 23"><rect x="1.500" y="10" width="21" height="11.500" fill="#5a94d8" stroke="#3a5a8a" stroke-width="1.300"/><path d="M4 19l2-5.500 12.500-11.500 3.500 3.500-12.500 11.500z" fill="#f0d08a" stroke="#a8823a" stroke-width="1"/><path d="M18.500 2l1.500-1.200 3.500 3.500-1.500 1.200z" fill="#d84a4a"/><path d="M4 19l1-3 2 2z" fill="#3a3a3a"/></svg>
<svg class="a" style="left:809px;top:385px;" width="26" height="22" viewBox="0 0 26 22"><rect x="1" y="2" width="17" height="16" fill="#f6f6f6" stroke="#9a9a9a" stroke-width="1"/><path d="M1 6h17M1 10h17M1 14h17M6.500 2v16M12.500 2v16" stroke="#a8a8a8" stroke-width="1"/><rect x="1" y="6.300" width="17" height="3.600" fill="#f2c230" stroke="#c8961a" stroke-width=".8"/><circle cx="19.500" cy="15.500" r="5" fill="#6cbc3a" stroke="#3a8a1a" stroke-width=".8"/><path d="M16.500 15.500h6M19.500 12.500v6" stroke="#fff" stroke-width="1.800"/></svg>
<svg class="a" style="left:843px;top:385px;" width="26" height="22" viewBox="0 0 26 22"><rect x="1" y="2" width="17" height="16" fill="#f6f6f6" stroke="#9a9a9a" stroke-width="1"/><path d="M1 6h17M1 10h17M1 14h17M6.500 2v16M12.500 2v16" stroke="#a8a8a8" stroke-width="1"/><rect x="1" y="6.300" width="17" height="3.600" fill="#f2c230" stroke="#c8961a" stroke-width=".8"/><rect x="13" y="12.500" width="11.500" height="5" rx="1" fill="#f08a5a" stroke="#b8502a" stroke-width=".9"/></svg>
<svg class="a" style="left:977px;top:384px;" width="25" height="23" viewBox="0 0 25 23"><rect x="1" y="1" width="14" height="14" fill="#f0f0f0" stroke="#a8a8a8" stroke-width="1"/><path d="M1 4.500h14M1 8h14M1 11.500h14M5.500 1v14M10.500 1v14" stroke="#b0b0b0" stroke-width="1"/><path d="M9 8.500q0-1 1-1h10.500l2 2v11q0 1-1 1h-11.500q-1 0-1-1z" fill="#4a7fb0" stroke="#2a557f" stroke-width="1"/><rect x="11.500" y="8" width="8" height="5" fill="#e6eef6"/><rect x="12" y="16" width="7.500" height="5" fill="#d4e0ec"/><rect x="16.500" y="17" width="2" height="3.500" fill="#3d6f9e"/></svg>
<svg class="a" style="left:1011px;top:384px;" width="25" height="23" viewBox="0 0 25 23"><rect x="1" y="1" width="14" height="14" fill="#f0f0f0" stroke="#a8a8a8" stroke-width="1"/><path d="M1 4.500h14M1 8h14M1 11.500h14M5.500 1v14M10.500 1v14" stroke="#b0b0b0" stroke-width="1"/><path d="M7 10.500q0-1.500 1.500-1.500h4l1.500 1.800h8q1.500 0 1.500 1.500v8.200q0 1.500-1.500 1.500h-13.500q-1.500 0-1.500-1.500z" fill="#8ab4d8" stroke="#4a7fb0" stroke-width="1"/><path d="M15.200 13.500l3.600 3.500h-2v3h-3.200v-3h-2z" fill="#e8f0f8" stroke="#3a6a9a" stroke-width=".8"/></svg>
<svg class="a" style="left:1171px;top:389px;" width="17" height="16" viewBox="0 0 17 16"><path d="M1 1.500h15M1 14.500h15" stroke="#3a4a6a" stroke-width="1.500"/><path d="M4 3v10M2 5.500l2-2.500 2 2.500M2 10.500l2 2.500 2-2.500" fill="none" stroke="#3a4a6a" stroke-width="1.300"/><text x="8" y="12.500" font-size="10" font-family="Liberation Sans, sans-serif" fill="#3a4a6a">A</text></svg>
<svg class="a" style="left:1499px;top:387px;" width="19" height="19" viewBox="0 0 19 19"><rect x="1" y="1" width="16.500" height="16.500" fill="#fff" stroke="#2a2a2a" stroke-width="1.800"/><rect x="11.500" y="1.500" width="5.500" height="15.500" fill="#4a4a4a"/></svg>
<svg class="a" style="left:1546px;top:384px;" width="34" height="37" viewBox="0 0 34 37"><rect x=".5" y=".5" width="32.500" height="35" rx="2" fill="#f4f4f4"/><rect x="3.300" y="5.300" width="27.500" height="27.700" fill="#0c4a86"/><rect x="4.6" y="8.3" width="7" height="2.400" fill="#ffffff"/><rect x="13.5" y="8.3" width="7" height="2.400" fill="#ffffff"/><rect x="22.4" y="8.3" width="7" height="2.400" fill="#ffffff"/><rect x="4.6" y="13.3" width="7" height="2.400" fill="#ffffff"/><rect x="13.5" y="13.3" width="7" height="2.400" fill="#ffffff"/><rect x="22.4" y="13.3" width="7" height="2.400" fill="#ffffff"/><rect x="4.6" y="18.3" width="7" height="2.400" fill="#ffffff"/><rect x="13.5" y="18.3" width="7" height="2.400" fill="#ffffff"/><rect x="22.4" y="18.3" width="7" height="2.400" fill="#ffffff"/><rect x="4.6" y="23.3" width="7" height="2.400" fill="#ffffff"/><rect x="13.5" y="23.3" width="7" height="2.400" fill="#ffffff"/><rect x="22.4" y="23.3" width="7" height="2.400" fill="#ffffff"/><rect x="4.6" y="28.3" width="7" height="2.400" fill="#ffffff"/><rect x="13.5" y="28.3" width="7" height="2.400" fill="#ffffff"/><rect x="22.4" y="28.3" width="7" height="2.400" fill="#ffffff"/></svg>
<svg class="a" style="left:1546px;top:470px;" width="36" height="37" viewBox="0 0 36 37"><rect x="1" y="1" width="32" height="33" rx="1.500" fill="#ececec" stroke="#dcdcdc" stroke-width="1"/><rect x="4.500" y="5" width="25" height="25" fill="none" stroke="#d4d4d4" stroke-width="1.200"/><path d="M4.500 9h25M8 14h8v6h-8zM18 15h9M18 19h9M10 24h12" fill="none" stroke="#d4d4d4" stroke-width="1.200"/></svg>
<svg class="a" style="left:1546px;top:556px;" width="36" height="37" viewBox="0 0 36 37"><rect x="1" y="1" width="32" height="33" rx="1.500" fill="#ececec" stroke="#dcdcdc" stroke-width="1"/><path d="M4.500 6h14M4.500 10h12M4.500 14h12M4.500 18h25M4.500 22h25M4.500 26h25M4.500 30h25M12 6v24M21 17v13" stroke="#d6d6d6" stroke-width="1.200"/><circle cx="24" cy="8.500" r="5.500" fill="#ececec" stroke="#d0d0d0" stroke-width="1.800"/><path d="M28 13l6 6" stroke="#d0d0d0" stroke-width="2.600"/></svg>
<svg class="a" style="left:1546px;top:641px;" width="36" height="37" viewBox="0 0 36 37"><rect x="1" y="1" width="32" height="33" rx="1.500" fill="#ececec" stroke="#dcdcdc" stroke-width="1"/><path d="M4.500 6h14M4.500 10h12M4.500 14h12M4.500 18h14M4.500 22h25M4.500 26h25M4.500 30h25" stroke="#d6d6d6" stroke-width="1.200"/><circle cx="25" cy="11" r="6.500" fill="#ececec" stroke="#d0d0d0" stroke-width="1.800"/><circle cx="25" cy="11" r="2.800" fill="none" stroke="#d0d0d0" stroke-width="1.200"/><path d="M28.500 3l2-2.500" stroke="#d0d0d0" stroke-width="1.600"/></svg>
<svg class="a" style="left:1546px;top:728px;" width="36" height="34" viewBox="0 0 36 34"><path d="M5 3h4v3h-4zM7 6v4M5 10h4v3h-4zM3 19h5v3h-5zM14 19h5v3h-5zM25 19h5v3h-5zM8 20.500h6M19 20.500h6M3 27h5v3h-5zM14 27h5v3h-5zM25 27h5v3h-5z" fill="none" stroke="#d0d0d0" stroke-width="1.200"/></svg>
<svg class="a" style="left:380px;top:889px;" width="17" height="12" viewBox="0 0 17 12"><path d="M5.500 4v-2.500h10v10.500" fill="none" stroke="#3a3a3a" stroke-width="1.300"/><rect x="1.500" y="5" width="10.500" height="8" fill="#fff" stroke="#3a3a3a" stroke-width="1.400"/><path d="M3.500 8.500v-5h10v8.500" fill="none" stroke="#3a3a3a" stroke-width="1.200"/></svg>
<svg class="a" style="left:1617px;top:123px;" width="12" height="12" viewBox="0 0 12 12"><polygon points="10,1 1.500,6 10,11" fill="#b4b4b4"/></svg>
<svg class="a" style="left:1653px;top:123px;" width="12" height="12" viewBox="0 0 12 12"><polygon points="2,1 10.500,6 2,11" fill="#b4b4b4"/></svg>
<div class="a" style="left:1680px;top:120px;width:1.5px;height:18px;background:#8f9bb5;"></div>
<svg class="a" style="left:1689px;top:118px;" width="22" height="23" viewBox="0 0 22 23"><rect x=".7" y=".7" width="20.600" height="21.600" rx="2.500" fill="#e2e2e2" stroke="#8a8a8a" stroke-width="1.200"/><path d="M5.500 5.500h4.500M7.700 5.500v10M5.500 15.500h4.500" stroke="#3a3a3a" stroke-width="1.500"/><text x="10.500" y="18" font-size="11" font-weight="bold" font-family="Liberation Sans, sans-serif" fill="#3a3a3a">?</text></svg>
<svg class="a" style="left:1722px;top:118px;" width="24" height="25" viewBox="0 0 24 25"><path d="M5.500 1h6l-3 4.500h3l-7.500 8 2-5.500h-3z" fill="#f2d560" stroke="#c09a30" stroke-width=".8"/><path d="M8 10h4.500M10.200 10v9.500M8 19.500h4.500" stroke="#3a3a3a" stroke-width="1.500"/><text x="13" y="22.500" font-size="11" font-weight="bold" font-family="Liberation Sans, sans-serif" fill="#3a3a3a">?</text></svg>
<div class="a" style="left:1754.5px;top:120px;width:1.5px;height:18px;background:#8f9bb5;"></div>
</body></html>
